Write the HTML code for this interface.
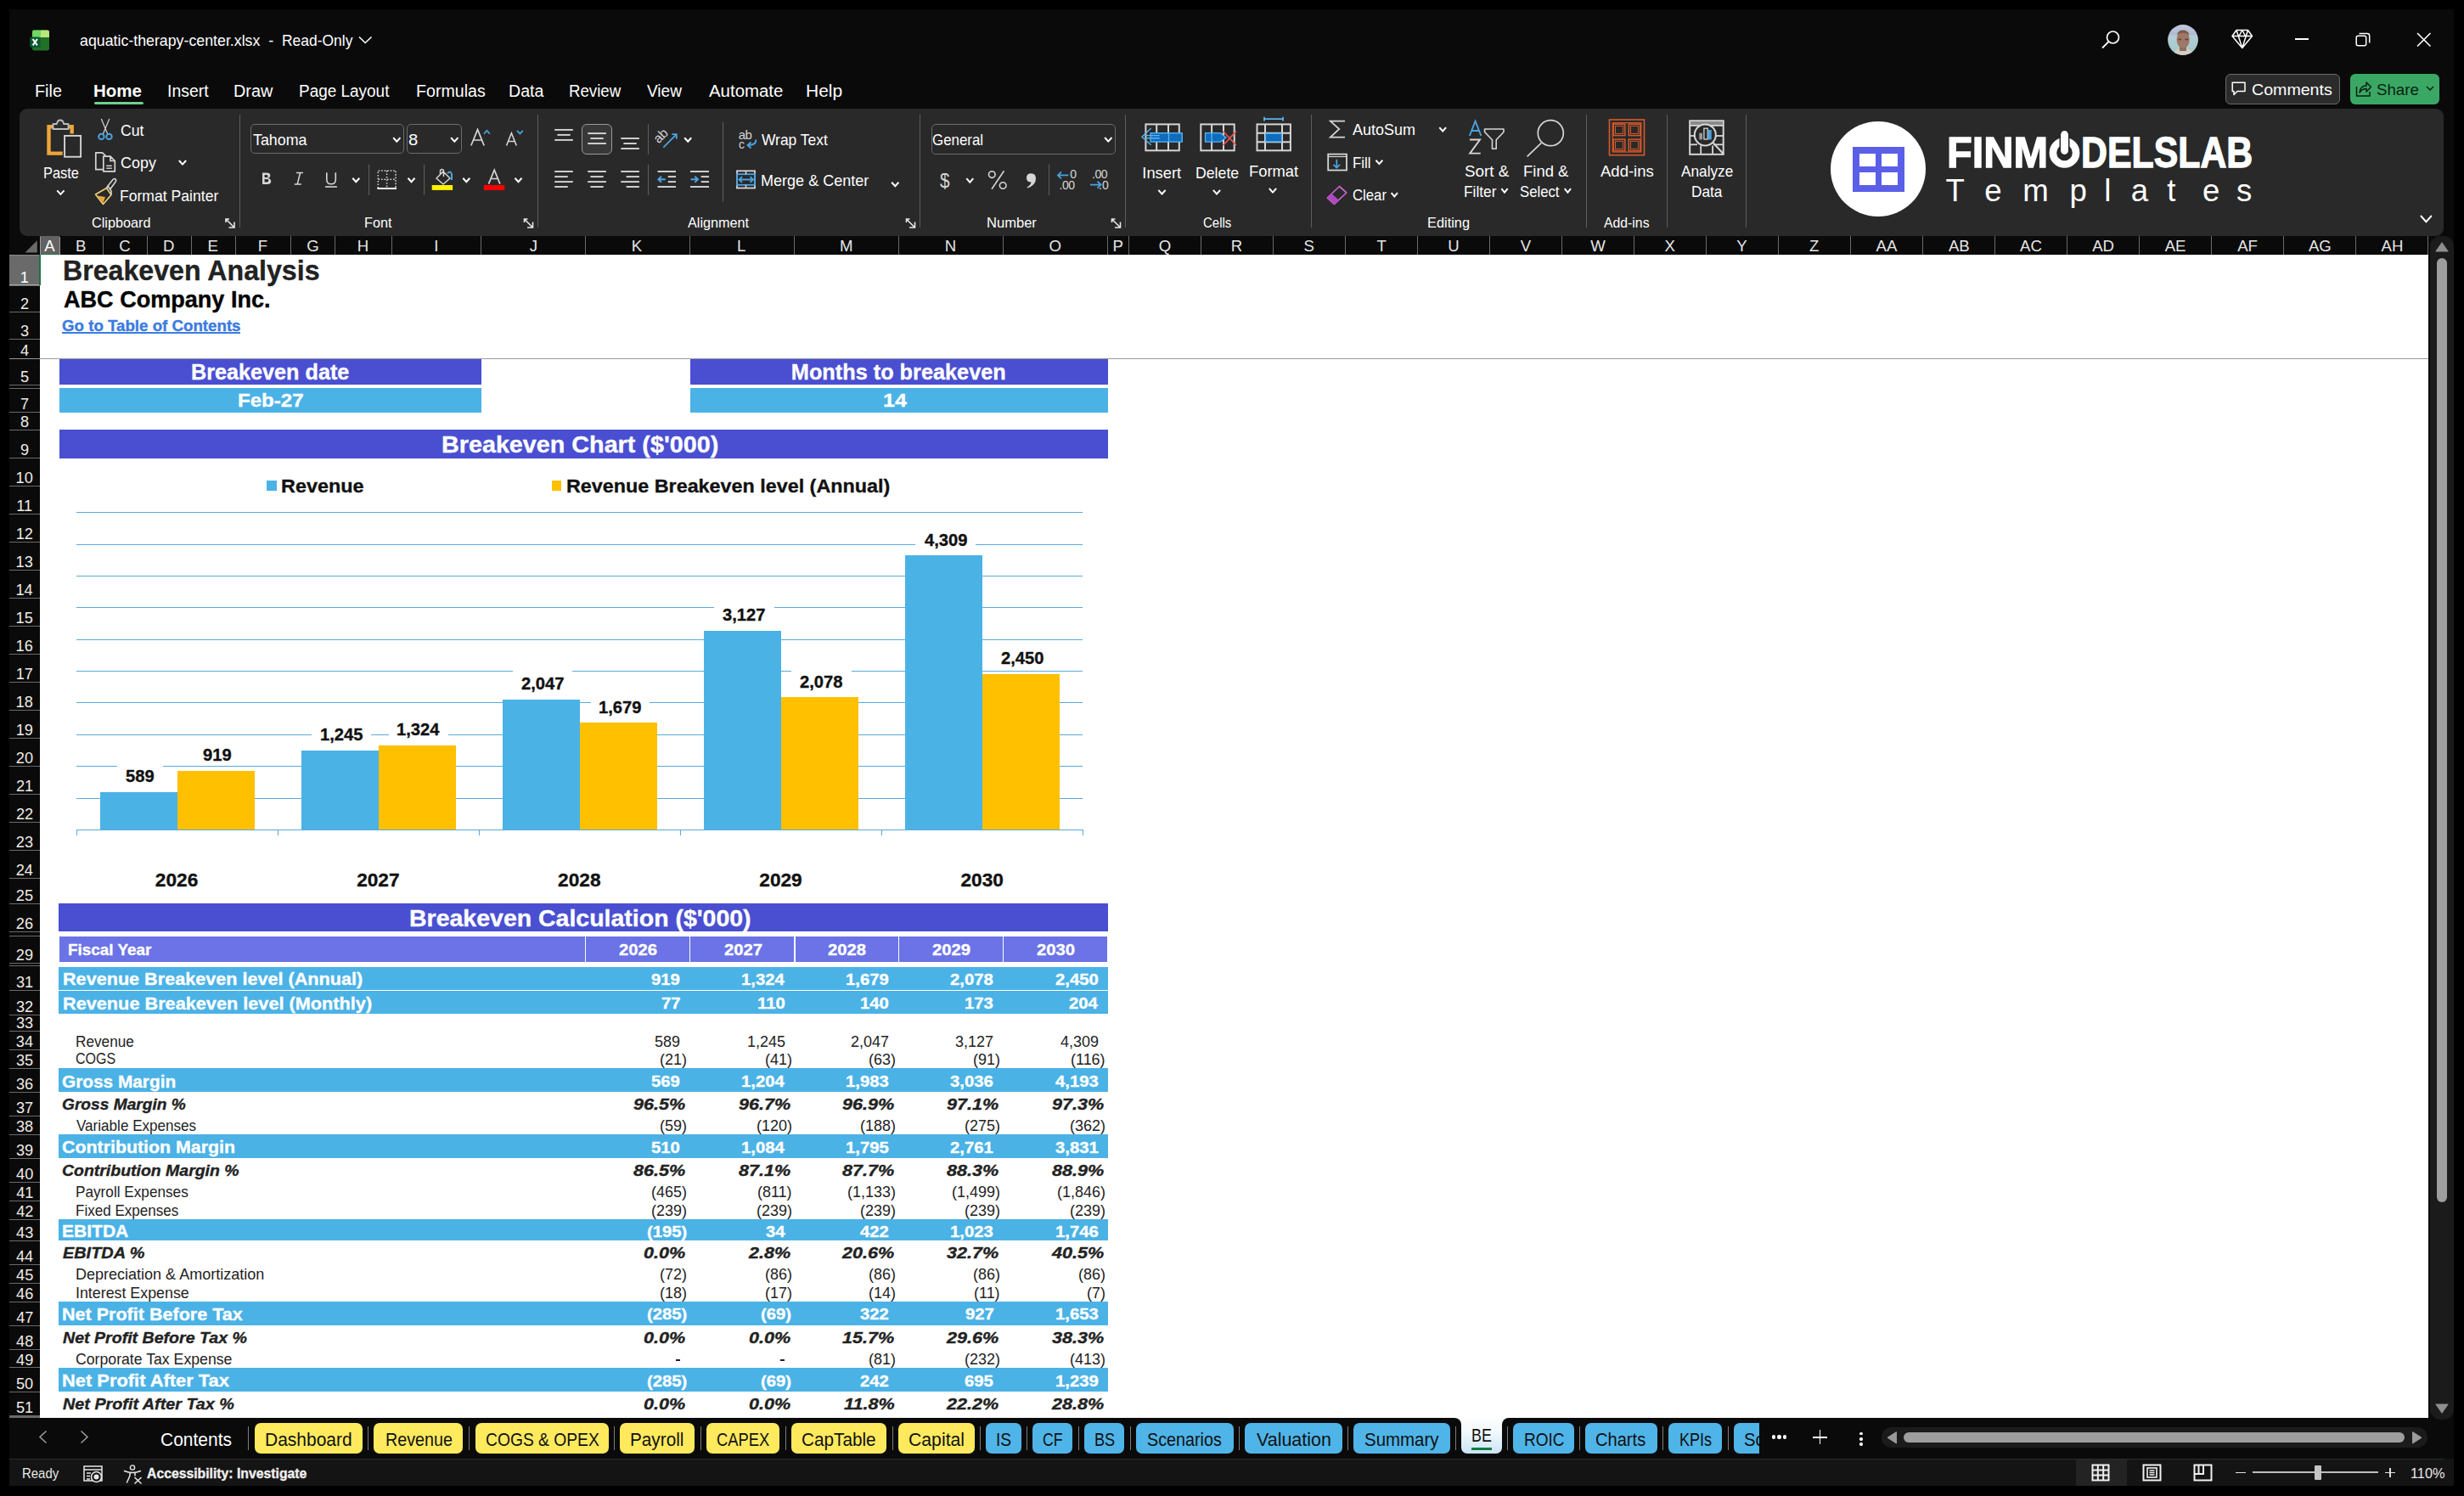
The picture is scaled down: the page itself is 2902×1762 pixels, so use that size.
<!DOCTYPE html>
<html><head><meta charset="utf-8"><title>Excel</title>
<style>
html,body{margin:0;padding:0;}
body{width:2902px;height:1762px;background:#000;position:relative;overflow:hidden;font-family:"Liberation Sans",sans-serif;}
div{box-sizing:border-box;}
svg{overflow:visible;}
</style></head><body>
<div style="position:absolute;left:11.00px;top:11.00px;width:2879.00px;height:1739.00px;background:#0a0a0a;"></div>
<svg style="position:absolute;left:35.00px;top:34.50px;" width="24" height="25" viewBox="0 0 24 25">
<rect x="3" y="0.4" width="20" height="24" rx="2.2" fill="#207028"/>
<path d="M3 9 V2.6 Q3 0.4 5.2 0.4 H13 V9 Z" fill="#72d564"/>
<path d="M13 0.4 H20.8 Q23 0.4 23 2.6 V9 H13 Z" fill="#b9e77a"/>
<rect x="0.2" y="8.5" width="12.4" height="12.4" rx="2.5" fill="#0b5a30"/>
<path d="M3.6 11 L8.9 18.4 M8.9 11 L3.6 18.4" stroke="#ffffff" stroke-width="2.1"/>
</svg>
<div style="position:absolute;left:94.24px;top:39.02px;font-size:18.17px;line-height:18.17px;font-weight:normal;font-style:normal;color:#fff;white-space:pre;transform:scaleX(0.9789);transform-origin:0 0;">aquatic-therapy-center.xlsx</div>
<div style="position:absolute;left:316.23px;top:39.02px;font-size:18.17px;line-height:18.17px;font-weight:normal;font-style:normal;color:#fff;white-space:pre;">-</div>
<div style="position:absolute;left:332.00px;top:39.02px;font-size:18.17px;line-height:18.17px;font-weight:normal;font-style:normal;color:#fff;white-space:pre;transform:scaleX(0.9614);transform-origin:0 0;">Read-Only</div>
<svg style="position:absolute;left:422.00px;top:42.00px;" width="17" height="10" viewBox="0 0 17 10"><path d="M1 1.5 L8.2 8.5 L15.5 1.5" stroke="#fff" stroke-width="1.6" fill="none"/></svg>
<svg style="position:absolute;left:2474.00px;top:35.00px;" width="24" height="24" viewBox="0 0 24 24"><circle cx="14.5" cy="9" r="7" stroke="#fff" stroke-width="1.7" fill="none"/><path d="M9.5 14 L2 21.5" stroke="#fff" stroke-width="1.8"/></svg>
<svg style="position:absolute;left:2553.00px;top:29.00px;" width="36" height="36" viewBox="0 0 36 36"><defs><clipPath id="av"><circle cx="18" cy="18" r="17.9"/></clipPath>
<linearGradient id="avg" x1="0" y1="0" x2="0" y2="1"><stop offset="0" stop-color="#c4c8dc"/><stop offset="0.33" stop-color="#aebbd4"/><stop offset="0.36" stop-color="#b4cfd6"/><stop offset="1" stop-color="#9fc8c8"/></linearGradient></defs>
<g clip-path="url(#av)"><rect width="36" height="36" fill="url(#avg)"/>
<path d="M6 36 Q9 29 14 28 H22 Q28 29 31 36 Z" fill="#d6cdc2"/>
<rect x="14" y="22" width="8" height="9" fill="#8c6c5e"/>
<ellipse cx="18.2" cy="17.5" rx="7.6" ry="10.5" fill="#9e7766"/>
<path d="M11 12 Q12 6.5 18 6.5 Q24 6.5 25.5 12 Q22 9.5 18 9.5 Q14 9.5 11 12 Z" fill="#7d5a4c"/>
<path d="M12.5 17.5 H16 M20.5 17.5 H24" stroke="#5a3e34" stroke-width="1.3"/></g></svg>
<svg style="position:absolute;left:2628.00px;top:34.00px;" width="26" height="24" viewBox="0 0 26 24"><path d="M6 1.5 H19.5 L24.5 8.5 L12.8 22.5 L1 8.5 Z M1 8.5 H24.5 M6 1.5 L12.8 22.5 L19.5 1.5 M9 8.5 L12.8 1.5 L16.5 8.5" stroke="#fff" stroke-width="1.5" fill="none" stroke-linejoin="round"/></svg>
<div style="position:absolute;left:2703.00px;top:45.00px;width:16.00px;height:1.80px;background:#fff;"></div>
<svg style="position:absolute;left:2774.00px;top:38.00px;" width="19" height="19" viewBox="0 0 19 19"><rect x="1.2" y="4.2" width="11.5" height="11.5" rx="2" stroke="#fff" stroke-width="1.5" fill="none"/><path d="M4.5 1.5 H14 Q16.7 1.5 16.7 4.2 V12.5" stroke="#fff" stroke-width="1.5" fill="none"/></svg>
<svg style="position:absolute;left:2846.00px;top:38.00px;" width="18" height="18" viewBox="0 0 18 18"><path d="M1 1 L16.5 16.5 M16.5 1 L1 16.5" stroke="#fff" stroke-width="1.6"/></svg>
<div style="position:absolute;left:40.71px;top:97.57px;font-size:19.77px;line-height:19.77px;font-weight:normal;font-style:normal;color:#fff;white-space:pre;transform:scaleX(1.0033);transform-origin:0 0;">File</div>
<div style="position:absolute;left:196.85px;top:97.57px;font-size:19.77px;line-height:19.77px;font-weight:normal;font-style:normal;color:#fff;white-space:pre;transform:scaleX(0.9844);transform-origin:0 0;">Insert</div>
<div style="position:absolute;left:275.41px;top:97.57px;font-size:19.77px;line-height:19.77px;font-weight:normal;font-style:normal;color:#fff;white-space:pre;transform:scaleX(1.0039);transform-origin:0 0;">Draw</div>
<div style="position:absolute;left:352.08px;top:97.57px;font-size:19.77px;line-height:19.77px;font-weight:normal;font-style:normal;color:#fff;white-space:pre;transform:scaleX(0.9587);transform-origin:0 0;">Page Layout</div>
<div style="position:absolute;left:490.23px;top:97.57px;font-size:19.77px;line-height:19.77px;font-weight:normal;font-style:normal;color:#fff;white-space:pre;transform:scaleX(0.9924);transform-origin:0 0;">Formulas</div>
<div style="position:absolute;left:598.73px;top:97.57px;font-size:19.77px;line-height:19.77px;font-weight:normal;font-style:normal;color:#fff;white-space:pre;transform:scaleX(0.9906);transform-origin:0 0;">Data</div>
<div style="position:absolute;left:670.01px;top:97.57px;font-size:19.77px;line-height:19.77px;font-weight:normal;font-style:normal;color:#fff;white-space:pre;transform:scaleX(0.9446);transform-origin:0 0;">Review</div>
<div style="position:absolute;left:761.95px;top:97.57px;font-size:19.77px;line-height:19.77px;font-weight:normal;font-style:normal;color:#fff;white-space:pre;transform:scaleX(0.9647);transform-origin:0 0;">View</div>
<div style="position:absolute;left:834.80px;top:97.57px;font-size:19.77px;line-height:19.77px;font-weight:normal;font-style:normal;color:#fff;white-space:pre;transform:scaleX(1.0327);transform-origin:0 0;">Automate</div>
<div style="position:absolute;left:949.22px;top:97.57px;font-size:19.77px;line-height:19.77px;font-weight:normal;font-style:normal;color:#fff;white-space:pre;transform:scaleX(1.0614);transform-origin:0 0;">Help</div>
<div style="position:absolute;left:110.07px;top:97.57px;font-size:19.77px;line-height:19.77px;font-weight:bold;font-style:normal;color:#fff;white-space:pre;transform:scaleX(1.0382);transform-origin:0 0;">Home</div>
<div style="position:absolute;left:110.70px;top:119.80px;width:58.40px;height:3.00px;background:#6fcf8f;border-radius:2px;"></div>
<div style="position:absolute;left:2621.30px;top:87.20px;width:134.30px;height:35.60px;background:#2b2b2b;border:1.2px solid #6a6a6a;border-radius:6px;"></div>
<svg style="position:absolute;left:2628.00px;top:96.00px;" width="18" height="18" viewBox="0 0 18 18"><path d="M1.2 1.2 H16 V11.5 H7 L3 15.5 V11.5 H1.2 Z" stroke="#fff" stroke-width="1.5" fill="none" stroke-linejoin="round"/></svg>
<div style="position:absolute;left:2651.82px;top:98.17px;font-size:17.88px;line-height:17.88px;font-weight:normal;font-style:normal;color:#fff;white-space:pre;transform:scaleX(1.0975);transform-origin:0 0;">Comments</div>
<div style="position:absolute;left:2768.00px;top:87.20px;width:104.80px;height:35.60px;background:#3aa864;border-radius:6px;"></div>
<svg style="position:absolute;left:2774.00px;top:95.00px;" width="20" height="20" viewBox="0 0 20 20"><path d="M1.5 7 V18 H17 V13" stroke="#0a1f12" stroke-width="1.5" fill="none"/><path d="M5 14 Q6 6 13 6 V2 L18.5 7.5 L13 13 V9.5 Q8 9.5 5 14 Z" stroke="#0a1f12" stroke-width="1.5" fill="none" stroke-linejoin="round"/></svg>
<div style="position:absolute;left:2798.76px;top:98.17px;font-size:17.88px;line-height:17.88px;font-weight:normal;font-style:normal;color:#0a1f12;white-space:pre;transform:scaleX(1.0450);transform-origin:0 0;">Share</div>
<svg style="position:absolute;left:2857.00px;top:101.00px;" width="10" height="7" viewBox="0 0 10 7"><path d="M1 1 L5 5 L9 1" stroke="#0a1f12" stroke-width="1.5" fill="none"/></svg>
<div style="position:absolute;left:23.00px;top:128.00px;width:2855.00px;height:149.50px;background:#292929;border-radius:9px;"></div>
<div style="position:absolute;left:281.80px;top:135.00px;width:1.20px;height:133.00px;background:#5c5c5c;"></div>
<div style="position:absolute;left:632.90px;top:135.00px;width:1.20px;height:133.00px;background:#5c5c5c;"></div>
<div style="position:absolute;left:1082.60px;top:135.00px;width:1.20px;height:133.00px;background:#5c5c5c;"></div>
<div style="position:absolute;left:1324.90px;top:135.00px;width:1.20px;height:133.00px;background:#5c5c5c;"></div>
<div style="position:absolute;left:1543.80px;top:135.00px;width:1.20px;height:133.00px;background:#5c5c5c;"></div>
<div style="position:absolute;left:1868.10px;top:135.00px;width:1.20px;height:133.00px;background:#5c5c5c;"></div>
<div style="position:absolute;left:1962.80px;top:135.00px;width:1.20px;height:133.00px;background:#5c5c5c;"></div>
<div style="position:absolute;left:2056.20px;top:135.00px;width:1.20px;height:133.00px;background:#5c5c5c;"></div>
<div style="position:absolute;left:108.49px;top:254.97px;font-size:15.99px;line-height:15.99px;font-weight:normal;font-style:normal;color:#fff;white-space:pre;transform:scaleX(1.0145);transform-origin:0 0;">Clipboard</div>
<div style="position:absolute;left:428.70px;top:254.97px;font-size:15.99px;line-height:15.99px;font-weight:normal;font-style:normal;color:#fff;white-space:pre;transform:scaleX(1.0125);transform-origin:0 0;">Font</div>
<div style="position:absolute;left:810.00px;top:254.97px;font-size:15.99px;line-height:15.99px;font-weight:normal;font-style:normal;color:#fff;white-space:pre;transform:scaleX(1.0137);transform-origin:0 0;">Alignment</div>
<div style="position:absolute;left:1162.18px;top:254.97px;font-size:15.99px;line-height:15.99px;font-weight:normal;font-style:normal;color:#fff;white-space:pre;transform:scaleX(1.0358);transform-origin:0 0;">Number</div>
<div style="position:absolute;left:1417.25px;top:254.97px;font-size:15.99px;line-height:15.99px;font-weight:normal;font-style:normal;color:#fff;white-space:pre;transform:scaleX(0.9364);transform-origin:0 0;">Cells</div>
<div style="position:absolute;left:1681.19px;top:254.97px;font-size:15.99px;line-height:15.99px;font-weight:normal;font-style:normal;color:#fff;white-space:pre;transform:scaleX(1.0235);transform-origin:0 0;">Editing</div>
<div style="position:absolute;left:1888.50px;top:254.97px;font-size:15.99px;line-height:15.99px;font-weight:normal;font-style:normal;color:#fff;white-space:pre;transform:scaleX(0.9881);transform-origin:0 0;">Add-ins</div>
<div style="position:absolute;left:50.68px;top:195.30px;font-size:18.31px;line-height:18.31px;font-weight:normal;font-style:normal;color:#fff;white-space:pre;transform:scaleX(0.8979);transform-origin:0 0;">Paste</div>
<div style="position:absolute;left:141.62px;top:144.50px;font-size:18.31px;line-height:18.31px;font-weight:normal;font-style:normal;color:#fff;white-space:pre;transform:scaleX(0.9647);transform-origin:0 0;">Cut</div>
<div style="position:absolute;left:141.60px;top:183.30px;font-size:18.31px;line-height:18.31px;font-weight:normal;font-style:normal;color:#fff;white-space:pre;transform:scaleX(0.9798);transform-origin:0 0;">Copy</div>
<div style="position:absolute;left:141.09px;top:222.10px;font-size:18.31px;line-height:18.31px;font-weight:normal;font-style:normal;color:#fff;white-space:pre;transform:scaleX(0.9609);transform-origin:0 0;">Format Painter</div>
<div style="position:absolute;left:298.24px;top:155.90px;font-size:18.31px;line-height:18.31px;font-weight:normal;font-style:normal;color:#fff;white-space:pre;transform:scaleX(0.9748);transform-origin:0 0;">Tahoma</div>
<div style="position:absolute;left:481.24px;top:155.90px;font-size:18.31px;line-height:18.31px;font-weight:normal;font-style:normal;color:#fff;white-space:pre;transform:scaleX(1.1094);transform-origin:0 0;">8</div>
<div style="position:absolute;left:897.26px;top:156.00px;font-size:18.31px;line-height:18.31px;font-weight:normal;font-style:normal;color:#fff;white-space:pre;transform:scaleX(0.9518);transform-origin:0 0;">Wrap Text</div>
<div style="position:absolute;left:895.86px;top:203.80px;font-size:18.31px;line-height:18.31px;font-weight:normal;font-style:normal;color:#fff;white-space:pre;transform:scaleX(0.9858);transform-origin:0 0;">Merge &amp; Center</div>
<div style="position:absolute;left:1098.15px;top:156.10px;font-size:18.31px;line-height:18.31px;font-weight:normal;font-style:normal;color:#fff;white-space:pre;transform:scaleX(0.9231);transform-origin:0 0;">General</div>
<div style="position:absolute;left:1345.35px;top:195.20px;font-size:18.31px;line-height:18.31px;font-weight:normal;font-style:normal;color:#fff;white-space:pre;">Insert</div>
<div style="position:absolute;left:1408.18px;top:195.20px;font-size:18.31px;line-height:18.31px;font-weight:normal;font-style:normal;color:#fff;white-space:pre;transform:scaleX(0.9668);transform-origin:0 0;">Delete</div>
<div style="position:absolute;left:1471.03px;top:193.30px;font-size:18.31px;line-height:18.31px;font-weight:normal;font-style:normal;color:#fff;white-space:pre;transform:scaleX(1.0044);transform-origin:0 0;">Format</div>
<div style="position:absolute;left:1593.40px;top:144.40px;font-size:18.31px;line-height:18.31px;font-weight:normal;font-style:normal;color:#fff;white-space:pre;transform:scaleX(0.9848);transform-origin:0 0;">AutoSum</div>
<div style="position:absolute;left:1592.64px;top:183.00px;font-size:18.31px;line-height:18.31px;font-weight:normal;font-style:normal;color:#fff;white-space:pre;transform:scaleX(0.9257);transform-origin:0 0;">Fill</div>
<div style="position:absolute;left:1592.56px;top:221.40px;font-size:18.31px;line-height:18.31px;font-weight:normal;font-style:normal;color:#fff;white-space:pre;transform:scaleX(0.9136);transform-origin:0 0;">Clear</div>
<div style="position:absolute;left:1724.65px;top:193.10px;font-size:18.31px;line-height:18.31px;font-weight:normal;font-style:normal;color:#fff;white-space:pre;transform:scaleX(1.0298);transform-origin:0 0;">Sort &amp;</div>
<div style="position:absolute;left:1723.82px;top:217.10px;font-size:18.31px;line-height:18.31px;font-weight:normal;font-style:normal;color:#fff;white-space:pre;transform:scaleX(0.9445);transform-origin:0 0;">Filter</div>
<div style="position:absolute;left:1794.02px;top:193.10px;font-size:18.31px;line-height:18.31px;font-weight:normal;font-style:normal;color:#fff;white-space:pre;transform:scaleX(1.0100);transform-origin:0 0;">Find &amp;</div>
<div style="position:absolute;left:1789.85px;top:217.10px;font-size:18.31px;line-height:18.31px;font-weight:normal;font-style:normal;color:#fff;white-space:pre;transform:scaleX(0.9141);transform-origin:0 0;">Select</div>
<div style="position:absolute;left:1885.10px;top:193.10px;font-size:18.31px;line-height:18.31px;font-weight:normal;font-style:normal;color:#fff;white-space:pre;transform:scaleX(1.0123);transform-origin:0 0;">Add-ins</div>
<div style="position:absolute;left:1980.40px;top:193.10px;font-size:18.31px;line-height:18.31px;font-weight:normal;font-style:normal;color:#fff;white-space:pre;transform:scaleX(0.9414);transform-origin:0 0;">Analyze</div>
<div style="position:absolute;left:1991.82px;top:217.40px;font-size:18.31px;line-height:18.31px;font-weight:normal;font-style:normal;color:#fff;white-space:pre;transform:scaleX(0.9403);transform-origin:0 0;">Data</div>
<div style="position:absolute;left:295.20px;top:146.20px;width:180.40px;height:35.20px;background:transparent;border:1.3px solid #6a6a6a;border-radius:5px;"></div>
<div style="position:absolute;left:479.30px;top:146.20px;width:64.60px;height:35.20px;background:transparent;border:1.3px solid #6a6a6a;border-radius:5px;"></div>
<div style="position:absolute;left:1096.60px;top:146.40px;width:217.00px;height:35.20px;background:transparent;border:1.3px solid #6a6a6a;border-radius:5px;"></div>
<div style="position:absolute;left:685.20px;top:146.10px;width:35.50px;height:35.60px;background:#383838;border:1.3px solid #9a9a9a;border-radius:6px;"></div>
<svg style="position:absolute;left:0;top:0;" width="2902" height="300" viewBox="0 0 2902 300"><path d="M73.7 180.6 H57.5 V149.3 H63 M80 149.3 H84.7 V157.4" stroke="#eea63a" stroke-width="4.4" fill="none"/><path d="M62.5 152 V146 H67 Q67.5 141.5 71 141.5 Q74.5 141.5 75 146 H80.5 V152 Z" stroke="#bdbdbd" stroke-width="1.8" fill="#2d2d2d" stroke-linejoin="round"/><rect x="76.1" y="159.9" width="19" height="24.8" stroke="#d6d6d6" stroke-width="1.9" fill="#292929"/><path d="M67.26 224.32 L71.40 228.88 L75.54 224.32" stroke="#ffffff" stroke-width="2.0" fill="none"/><path d="M119.3 140.1 L126.8 158 M128.8 140.1 L121.3 158" stroke="#d6d6d6" stroke-width="1.2" fill="none"/><circle cx="119.4" cy="160.9" r="3.2" stroke="#4aa3e0" stroke-width="2" fill="none"/><circle cx="128.5" cy="160.9" r="3.2" stroke="#4aa3e0" stroke-width="2" fill="none"/><path d="M121.5 199.7 H112.8 V179.8 H120.5 L124.5 183.5" stroke="#d6d6d6" stroke-width="1.7" fill="none" stroke-linejoin="round"/><path d="M121.8 184.2 H130 L135.3 189.5 V201.9 H121.8 Z M130 184.2 V189.5 H135.3" stroke="#d6d6d6" stroke-width="1.7" fill="#292929" stroke-linejoin="round"/><path d="M125.20 195.30 L131.80 195.30" stroke="#d6d6d6" stroke-width="1.4" /><path d="M125.20 198.20 L131.80 198.20" stroke="#d6d6d6" stroke-width="1.4" /><path d="M210.86 189.02 L215.00 193.58 L219.14 189.02" stroke="#ffffff" stroke-width="2.0" fill="none"/><path d="M112.5 229 L125.5 221.5 L131 229.5 L121.5 240.5 Z" stroke="#f0d27a" stroke-width="1.6" fill="none" stroke-linejoin="round"/><path d="M114.5 230.5 L124 232 L121.5 239 Z" fill="#eea63a"/><path d="M125.5 221.5 L127 219 L131 225 L131 229.5 M127 219 L133 211.5 Q135 209.5 136.3 211.5 Q137.3 213 135.5 215 L130 222.5" stroke="#d6d6d6" stroke-width="1.6" fill="none" stroke-linejoin="round"/><path d="M266 262 V258 H270 M266 258 L276 268 M276 261.5 V268 H269.5" stroke="#e8e8e8" stroke-width="1.6" fill="none"/><path d="M463.16 162.12 L467.30 166.68 L471.44 162.12" stroke="#ffffff" stroke-width="2.0" fill="none"/><path d="M531.16 162.12 L535.30 166.68 L539.44 162.12" stroke="#ffffff" stroke-width="2.0" fill="none"/><path d="M554.8 171.5 L562.5 152.6 L570.2 171.5 M557.6 165 H567.4" stroke="#d6d6d6" stroke-width="1.7" fill="none"/><path d="M570 157.6 L573.4 153.8 L576.8 157.6" stroke="#4aa3e0" stroke-width="1.7" fill="none"/><path d="M596.5 171.5 L602.4 156.8 L608.3 171.5 M598.7 166.5 H606.1" stroke="#d6d6d6" stroke-width="1.6" fill="none"/><path d="M609 153.8 L612.4 157.4 L615.8 153.8" stroke="#4aa3e0" stroke-width="1.7" fill="none"/><path d="M309 203.5 H314.2 Q318.3 203.5 318.3 206.8 Q318.3 209.3 315.5 209.9 Q319.2 210.5 319.2 213.5 Q319.2 217 314.6 217 H309 Z M311.6 205.9 V208.9 H314 Q315.6 208.9 315.6 207.4 Q315.6 205.9 314 205.9 Z M311.6 211 V214.6 H314.3 Q316.4 214.6 316.4 212.8 Q316.4 211 314.3 211 Z" fill="#d6d6d6" fill-rule="evenodd"/><path d="M349 203.5 H357 M346.8 217 H354.8 M353.6 203.5 L350.2 217" stroke="#d6d6d6" stroke-width="1.5" fill="none"/><path d="M384.8 203.3 V211.5 Q384.8 216.8 390 216.8 Q395.3 216.8 395.3 211.5 V203.3" stroke="#d6d6d6" stroke-width="1.6" fill="none"/><path d="M383.00 220.00 L396.90 220.00" stroke="#d6d6d6" stroke-width="1.6" /><path d="M415.30 209.72 L419.30 214.28 L423.30 209.72" stroke="#ffffff" stroke-width="2.0" fill="none"/><rect x="434" y="193.8" width="1.1" height="36" fill="#5c5c5c"/><path d="M445.3 221.5 V200.9 H466 V221.5 M455.6 201 V221 M445.5 211.2 H466" stroke="#d6d6d6" stroke-width="1.5" stroke-dasharray="1.6 1.9" fill="none"/><path d="M444.30 222.00 L467.00 222.00" stroke="#ffffff" stroke-width="2" /><path d="M480.50 209.72 L484.50 214.28 L488.50 209.72" stroke="#ffffff" stroke-width="2.0" fill="none"/><rect x="499" y="193.8" width="1.1" height="36" fill="#5c5c5c"/><path d="M514 210 L522 202 L530 210 L522 217 Z M518.5 205.5 V201.5 Q518.5 199.5 520.5 199.5 Q522.5 199.5 522.5 201.5 V208" stroke="#d6d6d6" stroke-width="1.5" fill="none" stroke-linejoin="round"/><path d="M527 204 Q530.5 200.5 532 205 V212" stroke="#4aa3e0" stroke-width="2" fill="none"/><rect x="508.7" y="218" width="24.4" height="5.9" fill="#fff200"/><path d="M545.30 209.72 L549.30 214.28 L553.30 209.72" stroke="#ffffff" stroke-width="2.0" fill="none"/><path d="M575.5 216.6 L582.2 200.2 L588.9 216.6 M578 210.5 H586.4" stroke="#d6d6d6" stroke-width="1.7" fill="none"/><rect x="569.8" y="218" width="24.5" height="5.9" fill="#ff0000"/><path d="M606.50 209.72 L610.50 214.28 L614.50 209.72" stroke="#ffffff" stroke-width="2.0" fill="none"/><path d="M617.5 262 V258 H621.5 M617.5 258 L627.5 268 M627.5 261.5 V268 H621.0" stroke="#e8e8e8" stroke-width="1.6" fill="none"/><path d="M653.20 152.90 L674.80 152.90" stroke="#d6d6d6" stroke-width="1.9" /><path d="M656.40 158.90 L671.70 158.90" stroke="#d6d6d6" stroke-width="1.9" /><path d="M653.20 164.90 L674.80 164.90" stroke="#d6d6d6" stroke-width="1.9" /><path d="M692.20 157.10 L713.90 157.10" stroke="#d6d6d6" stroke-width="1.9" /><path d="M695.40 163.00 L710.70 163.00" stroke="#d6d6d6" stroke-width="1.9" /><path d="M692.20 169.00 L713.90 169.00" stroke="#d6d6d6" stroke-width="1.9" /><path d="M731.30 163.00 L752.90 163.00" stroke="#d6d6d6" stroke-width="1.9" /><path d="M734.40 169.00 L749.70 169.00" stroke="#d6d6d6" stroke-width="1.9" /><path d="M731.30 175.00 L752.90 175.00" stroke="#d6d6d6" stroke-width="1.9" /><rect x="763" y="146" width="1.1" height="36" fill="#5c5c5c"/><rect x="763" y="193.8" width="1.1" height="36" fill="#5c5c5c"/><rect x="851" y="143.7" width="1.1" height="94" fill="#5c5c5c"/><text x="0" y="0" transform="translate(775.8 169.6) rotate(-45)" font-size="15.5" fill="#d6d6d6" font-family="Liberation Sans" letter-spacing="-0.3">ab</text><path d="M781.3 173.6 L796.8 158.2 M791.3 158.2 H796.8 V163.7" stroke="#4aa3e0" stroke-width="1.8" fill="none"/><path d="M806.20 162.27 L810.20 166.73 L814.20 162.27" stroke="#ffffff" stroke-width="2.0" fill="none"/><text x="869.8" y="163.6" font-size="15" fill="#d6d6d6" font-family="Liberation Sans" letter-spacing="-0.6">ab</text><text x="869.9" y="174.6" font-size="14" fill="#d6d6d6" font-family="Liberation Sans">c</text><path d="M890 164.5 Q891.5 170.5 881 171 M884.5 167.5 L880.5 171 L884.5 174.5" stroke="#4aa3e0" stroke-width="1.9" fill="none"/><path d="M653.20 202.00 L674.80 202.00" stroke="#d6d6d6" stroke-width="1.9" /><path d="M653.20 208.10 L668.70 208.10" stroke="#d6d6d6" stroke-width="1.9" /><path d="M653.20 214.10 L674.80 214.10" stroke="#d6d6d6" stroke-width="1.9" /><path d="M653.20 220.00 L668.70 220.00" stroke="#d6d6d6" stroke-width="1.9" /><path d="M692.20 202.00 L713.90 202.00" stroke="#d6d6d6" stroke-width="1.9" /><path d="M695.40 208.10 L710.70 208.10" stroke="#d6d6d6" stroke-width="1.9" /><path d="M692.20 214.10 L713.90 214.10" stroke="#d6d6d6" stroke-width="1.9" /><path d="M695.40 220.00 L710.70 220.00" stroke="#d6d6d6" stroke-width="1.9" /><path d="M731.30 202.00 L752.90 202.00" stroke="#d6d6d6" stroke-width="1.9" /><path d="M737.60 208.10 L752.90 208.10" stroke="#d6d6d6" stroke-width="1.9" /><path d="M731.30 214.10 L752.90 214.10" stroke="#d6d6d6" stroke-width="1.9" /><path d="M737.60 220.00 L752.90 220.00" stroke="#d6d6d6" stroke-width="1.9" /><path d="M774.50 202.00 L796.00 202.00" stroke="#d6d6d6" stroke-width="1.9" /><path d="M786.70 208.10 L796.00 208.10" stroke="#d6d6d6" stroke-width="1.9" /><path d="M786.70 214.10 L796.00 214.10" stroke="#d6d6d6" stroke-width="1.9" /><path d="M774.50 220.00 L796.00 220.00" stroke="#d6d6d6" stroke-width="1.9" /><path d="M783.8 211.2 H775.5 M779 207.7 L775.3 211.2 L779 214.7" stroke="#4aa3e0" stroke-width="1.9" fill="none"/><path d="M813.00 202.00 L835.00 202.00" stroke="#d6d6d6" stroke-width="1.9" /><path d="M825.70 208.10 L835.00 208.10" stroke="#d6d6d6" stroke-width="1.9" /><path d="M825.70 214.10 L835.00 214.10" stroke="#d6d6d6" stroke-width="1.9" /><path d="M813.00 220.00 L835.00 220.00" stroke="#d6d6d6" stroke-width="1.9" /><path d="M813.5 211.2 H821.8 M818.3 207.7 L822 211.2 L818.3 214.7" stroke="#4aa3e0" stroke-width="1.9" fill="none"/><rect x="868" y="201.3" width="21" height="20.2" stroke="#d6d6d6" stroke-width="1.8" fill="none"/><rect x="868" y="205.2" width="21" height="12.6" stroke="#4aa3e0" stroke-width="1.8" fill="none"/><path d="M878.50 201.30 L878.50 205.20" stroke="#d6d6d6" stroke-width="1.5" /><path d="M878.50 217.80 L878.50 221.50" stroke="#d6d6d6" stroke-width="1.5" /><path d="M870.5 211.5 H887 M874 208.2 L870.5 211.5 L874 214.8 M883.5 208.2 L887 211.5 L883.5 214.8" stroke="#4aa3e0" stroke-width="1.8" fill="none"/><path d="M1050.16 214.72 L1054.30 219.28 L1058.44 214.72" stroke="#ffffff" stroke-width="2.0" fill="none"/><path d="M1067.5 262 V258 H1071.5 M1067.5 258 L1077.5 268 M1077.5 261.5 V268 H1071.0" stroke="#e8e8e8" stroke-width="1.6" fill="none"/><path d="M1301.16 162.02 L1305.30 166.58 L1309.44 162.02" stroke="#ffffff" stroke-width="2.0" fill="none"/><text x="1107" y="221" font-size="24" fill="#d6d6d6" font-family="Liberation Sans" textLength="11.5" lengthAdjust="spacingAndGlyphs">$</text><path d="M1138.30 210.17 L1142.30 214.63 L1146.30 210.17" stroke="#ffffff" stroke-width="2.0" fill="none"/><circle cx="1168.3" cy="205.6" r="3.8" stroke="#d6d6d6" stroke-width="1.6" fill="none"/><circle cx="1181.2" cy="218.5" r="3.8" stroke="#d6d6d6" stroke-width="1.6" fill="none"/><path d="M1182.50 201.30 L1168.00 222.80" stroke="#d6d6d6" stroke-width="1.6" /><path d="M1214.5 204.2 Q1220 204.2 1220 210.5 Q1220 218 1210 221.6 L1209.5 220.5 Q1214 218 1214.5 214.5 Q1209 214.5 1209 209.5 Q1209 204.2 1214.5 204.2 Z" fill="#d6d6d6"/><rect x="1235" y="193.5" width="1.1" height="36.5" fill="#5c5c5c"/><path d="M1258.4 206.4 H1246 M1250 202.4 L1246 206.4 L1250 210.4" stroke="#4aa3e0" stroke-width="1.8" fill="none"/><text x="1260.2" y="210.4" font-size="14" fill="#d6d6d6" font-family="Liberation Sans">0</text><text x="1247.5" y="223" font-size="14" fill="#d6d6d6" font-family="Liberation Sans" letter-spacing="-0.5">.00</text><text x="1286" y="210.4" font-size="14" fill="#d6d6d6" font-family="Liberation Sans" letter-spacing="-0.5">.00</text><text x="1294" y="223" font-size="14" fill="#d6d6d6" font-family="Liberation Sans">.0</text><path d="M1284 217.6 H1296.5 M1292.5 213.6 L1296.5 217.6 L1292.5 221.6" stroke="#4aa3e0" stroke-width="1.8" fill="none"/><path d="M1309.5 262 V258 H1313.5 M1309.5 258 L1319.5 268 M1319.5 261.5 V268 H1313.0" stroke="#e8e8e8" stroke-width="1.6" fill="none"/><rect x="1349.4" y="146.4" width="39.399999999999864" height="30.900000000000006" stroke="#d6d6d6" stroke-width="2" fill="none"/><path d="M1362.20 146.40 L1362.20 177.30" stroke="#d6d6d6" stroke-width="2" /><path d="M1376.00 146.40 L1376.00 177.30" stroke="#d6d6d6" stroke-width="2" /><rect x="1355" y="156.7" width="37.3" height="10.4" fill="#0f6cbd" stroke="#5ab4f0" stroke-width="1.3"/><path d="M1376.50 156.70 L1376.50 167.10" stroke="#5ab4f0" stroke-width="1.3" /><path d="M1365.8 159.6 H1349 M1365.8 162.8 H1349 M1355.7 151.1 L1345 161.2 L1355.7 170.8" stroke="#5ab4f0" stroke-width="1.4" fill="none"/><rect x="1414.3" y="146.4" width="39.40000000000009" height="30.900000000000006" stroke="#d6d6d6" stroke-width="2" fill="none"/><path d="M1427.10 146.40 L1427.10 177.30" stroke="#d6d6d6" stroke-width="2" /><path d="M1441.00 146.40 L1441.00 177.30" stroke="#d6d6d6" stroke-width="2" /><path d="M1419.5 156.7 H1437.5 L1444 161.9 L1437.5 167.1 H1419.5 Z" fill="#0f6cbd" stroke="#5ab4f0" stroke-width="1.3"/><path d="M1427.10 156.70 L1427.10 167.10" stroke="#5ab4f0" stroke-width="1.3" /><path d="M1440.5 154.5 L1456 171.2 M1456 154.5 L1440.5 171.2" stroke="#e25555" stroke-width="1.8"/><rect x="1480.5" y="146.4" width="39.40000000000009" height="30.900000000000006" stroke="#d6d6d6" stroke-width="2" fill="none"/><path d="M1490.00 146.40 L1490.00 177.30" stroke="#d6d6d6" stroke-width="2" /><path d="M1510.00 146.40 L1510.00 177.30" stroke="#d6d6d6" stroke-width="2" /><path d="M1480.50 156.80 L1519.90 156.80" stroke="#d6d6d6" stroke-width="2" /><path d="M1480.50 167.30 L1519.90 167.30" stroke="#d6d6d6" stroke-width="2" /><rect x="1490.5" y="157.2" width="19" height="9.7" fill="#0f6cbd" stroke="#5ab4f0" stroke-width="1.2"/><path d="M1489 140.2 H1511 M1489 137.8 V142.6 M1511 137.8 V142.6" stroke="#5ab4f0" stroke-width="1.8" fill="none"/><path d="M1364.36 223.92 L1368.50 228.48 L1372.64 223.92" stroke="#ffffff" stroke-width="2.0" fill="none"/><path d="M1428.86 223.92 L1433.00 228.48 L1437.14 223.92" stroke="#ffffff" stroke-width="2.0" fill="none"/><path d="M1494.86 222.02 L1499.00 226.58 L1503.14 222.02" stroke="#ffffff" stroke-width="2.0" fill="none"/><path d="M1584 142.6 H1566.8 L1577.3 152 L1566.8 161.6 H1584" stroke="#d6d6d6" stroke-width="1.7" fill="none" stroke-linejoin="miter"/><path d="M1695.29 150.16 L1699.20 154.44 L1703.11 150.16" stroke="#ffffff" stroke-width="2.0" fill="none"/><rect x="1564.2" y="181.6" width="21.8" height="18.9" stroke="#d6d6d6" stroke-width="1.8" fill="none"/><path d="M1564.20 184.50 L1586.00 184.50" stroke="#d6d6d6" stroke-width="1.2" /><path d="M1574.3 187.8 V197.5 M1570.5 193.8 L1574.3 197.6 L1578.1 193.8" stroke="#4aa3e0" stroke-width="1.8" fill="none"/><path d="M1620.49 188.72 L1624.40 193.09 L1628.31 188.72" stroke="#ffffff" stroke-width="2.0" fill="none"/><path d="M1577.5 219.5 L1585.8 227 L1571.4 240.3 L1563.3 233 Z" stroke="#c464d0" stroke-width="1.7" fill="none" stroke-linejoin="round"/><path d="M1563.3 233 L1568.6 228.2 L1576.7 235.5 L1571.4 240.3 Z" fill="#b048c0"/><path d="M1638.62 227.12 L1642.30 231.49 L1645.98 227.12" stroke="#ffffff" stroke-width="2.0" fill="none"/><path d="M1730.8 160 L1737.6 142.6 L1744.4 160 M1733.3 154 H1742" stroke="#4aa3e0" stroke-width="1.9" fill="none"/><path d="M1731 164.5 H1743 L1731.2 180.6 H1743.8" stroke="#d6d6d6" stroke-width="1.9" fill="none" stroke-linejoin="miter"/><path d="M1748.6 152 H1771 V155.5 L1762.2 164.8 V175.2 H1757.5 V164.8 L1748.6 155.5 Z" stroke="#d6d6d6" stroke-width="1.6" fill="none" stroke-linejoin="round"/><path d="M1768.32 222.22 L1772.00 226.59 L1775.68 222.22" stroke="#ffffff" stroke-width="2.0" fill="none"/><circle cx="1826.3" cy="156.7" r="15" stroke="#d6d6d6" stroke-width="1.7" fill="none"/><path d="M1815.30 168.30 L1798.60 184.30" stroke="#d6d6d6" stroke-width="1.7" /><path d="M1842.72 222.22 L1846.40 226.59 L1850.08 222.22" stroke="#ffffff" stroke-width="2.0" fill="none"/><rect x="1895.5" y="141" width="41" height="41.7" stroke="#d65a2c" stroke-width="1.6" fill="none"/><rect x="1899.2" y="144.7" width="33.6" height="34.3" stroke="#d65a2c" stroke-width="1.2" fill="none"/><rect x="1900.3" y="146.1" width="13.5" height="13.5" stroke="#d65a2c" stroke-width="1.5" fill="none"/><rect x="1902.5" y="148.29999999999998" width="9.1" height="9.1" stroke="#d65a2c" stroke-width="1" fill="none"/><rect x="1900.3" y="164.1" width="13.5" height="13.5" stroke="#d65a2c" stroke-width="1.5" fill="none"/><rect x="1902.5" y="166.29999999999998" width="9.1" height="9.1" stroke="#d65a2c" stroke-width="1" fill="none"/><rect x="1918.3" y="146.1" width="13.5" height="13.5" stroke="#d65a2c" stroke-width="1.5" fill="none"/><rect x="1920.5" y="148.29999999999998" width="9.1" height="9.1" stroke="#d65a2c" stroke-width="1" fill="none"/><rect x="1918.3" y="164.1" width="13.5" height="13.5" stroke="#d65a2c" stroke-width="1.5" fill="none"/><rect x="1920.5" y="166.29999999999998" width="9.1" height="9.1" stroke="#d65a2c" stroke-width="1" fill="none"/><rect x="1990.2" y="142.3" width="39.5" height="39.5" stroke="#d6d6d6" stroke-width="2" fill="none"/><rect x="1991" y="143" width="38" height="4.5" fill="#8a8a8a"/><path d="M1990.20 147.80 L2030.00 147.80" stroke="#d6d6d6" stroke-width="1.8" /><path d="M1990.20 160.00 L1996.00 160.00" stroke="#d6d6d6" stroke-width="1.8" /><path d="M2021.00 160.00 L2030.00 160.00" stroke="#d6d6d6" stroke-width="1.8" /><path d="M1990.20 170.30 L1999.00 170.30" stroke="#d6d6d6" stroke-width="1.8" /><path d="M2018.00 170.30 L2030.00 170.30" stroke="#d6d6d6" stroke-width="1.8" /><path d="M2003.20 171.50 L2003.20 182.00" stroke="#d6d6d6" stroke-width="1.8" /><path d="M2017.10 171.50 L2017.10 182.00" stroke="#d6d6d6" stroke-width="1.8" /><circle cx="2008.3" cy="158.9" r="12.5" stroke="#d6d6d6" stroke-width="2" fill="#292929"/><path d="M2017.50 168.00 L2030.00 181.50" stroke="#d6d6d6" stroke-width="2" /><rect x="2001.3" y="156.7" width="3.7" height="7.7" fill="#9a9a9a"/><rect x="2006.9" y="151.2" width="4.3" height="12.8" stroke="#d6d6d6" stroke-width="1.3" fill="none"/><rect x="2011.6" y="153" width="4.1" height="11.4" fill="#4aa3e0"/><path d="M2850.96 254.04 L2857.40 261.16 L2863.84 254.04" stroke="#ffffff" stroke-width="2.0" fill="none"/></svg>
<div style="position:absolute;left:2156.4px;top:142.7px;width:111.8px;height:112.2px;border-radius:50%;background:#ffffff;"></div>
<div style="position:absolute;left:2182.00px;top:173.20px;width:61.00px;height:52.60px;background:#5b5fe8;"></div>
<div style="position:absolute;left:2190.00px;top:180.80px;width:19.30px;height:14.90px;background:#ffffff;"></div>
<div style="position:absolute;left:2190.00px;top:203.40px;width:19.30px;height:14.30px;background:#ffffff;"></div>
<div style="position:absolute;left:2216.30px;top:180.80px;width:19.00px;height:14.90px;background:#ffffff;"></div>
<div style="position:absolute;left:2216.30px;top:203.40px;width:19.00px;height:14.30px;background:#ffffff;"></div>
<div style="position:absolute;left:2292.83px;top:155.43px;font-size:50.29px;line-height:50.29px;font-weight:bold;font-style:normal;color:#ffffff;white-space:pre;transform:scaleX(0.9699);transform-origin:0 0;-webkit-text-stroke:1.3px #ffffff;">FINM</div>
<div style="position:absolute;left:2450.52px;top:155.43px;font-size:50.29px;line-height:50.29px;font-weight:bold;font-style:normal;color:#ffffff;white-space:pre;transform:scaleX(0.8518);transform-origin:0 0;-webkit-text-stroke:1.3px #ffffff;">DELSLAB</div>
<svg style="position:absolute;left:2410.00px;top:150.00px;" width="44" height="52" viewBox="0 0 44 52"><circle cx="21.5" cy="29.9" r="13.6" stroke="#ffffff" stroke-width="8.6" fill="none"/>
<path d="M21.5 8.5 V27.5" stroke="#292929" stroke-width="12" stroke-linecap="round"/>
<path d="M21.5 8.5 V27.5" stroke="#ffffff" stroke-width="8.8" stroke-linecap="round"/></svg>
<div style="position:absolute;left:2291.53px;top:207.19px;font-size:36.63px;line-height:36.63px;font-weight:normal;font-style:normal;color:#ffffff;white-space:pre;">T</div>
<div style="position:absolute;left:2337.34px;top:207.19px;font-size:36.63px;line-height:36.63px;font-weight:normal;font-style:normal;color:#ffffff;white-space:pre;">e</div>
<div style="position:absolute;left:2382.25px;top:207.19px;font-size:36.63px;line-height:36.63px;font-weight:normal;font-style:normal;color:#ffffff;white-space:pre;">m</div>
<div style="position:absolute;left:2437.42px;top:207.19px;font-size:36.63px;line-height:36.63px;font-weight:normal;font-style:normal;color:#ffffff;white-space:pre;">p</div>
<div style="position:absolute;left:2478.23px;top:207.19px;font-size:36.63px;line-height:36.63px;font-weight:normal;font-style:normal;color:#ffffff;white-space:pre;">l</div>
<div style="position:absolute;left:2509.76px;top:207.19px;font-size:36.63px;line-height:36.63px;font-weight:normal;font-style:normal;color:#ffffff;white-space:pre;">a</div>
<div style="position:absolute;left:2552.23px;top:207.19px;font-size:36.63px;line-height:36.63px;font-weight:normal;font-style:normal;color:#ffffff;white-space:pre;">t</div>
<div style="position:absolute;left:2594.09px;top:207.19px;font-size:36.63px;line-height:36.63px;font-weight:normal;font-style:normal;color:#ffffff;white-space:pre;">e</div>
<div style="position:absolute;left:2633.98px;top:207.19px;font-size:36.63px;line-height:36.63px;font-weight:normal;font-style:normal;color:#ffffff;white-space:pre;">s</div>
<div style="position:absolute;left:11.00px;top:277.50px;width:2850.00px;height:22.50px;background:#0a0a0a;"></div>
<div style="position:absolute;left:47.00px;top:278.00px;width:23.00px;height:22.00px;background:#626262;"></div>
<div style="position:absolute;left:47.00px;top:298.60px;width:23.00px;height:2.00px;background:#217346;"></div>
<div style="position:absolute;left:52.31px;top:281.05px;font-size:18.60px;line-height:18.60px;font-weight:normal;font-style:normal;color:#ffffff;white-space:pre;">A</div>
<div style="position:absolute;left:89.03px;top:281.05px;font-size:18.60px;line-height:18.60px;font-weight:normal;font-style:normal;color:#e6e6e6;white-space:pre;">B</div>
<div style="position:absolute;left:120.50px;top:278.00px;width:1.00px;height:22.00px;background:#6a6a6a;"></div>
<div style="position:absolute;left:140.16px;top:281.05px;font-size:18.60px;line-height:18.60px;font-weight:normal;font-style:normal;color:#e6e6e6;white-space:pre;">C</div>
<div style="position:absolute;left:172.50px;top:278.00px;width:1.00px;height:22.00px;background:#6a6a6a;"></div>
<div style="position:absolute;left:191.98px;top:281.05px;font-size:18.60px;line-height:18.60px;font-weight:normal;font-style:normal;color:#e6e6e6;white-space:pre;">D</div>
<div style="position:absolute;left:224.50px;top:278.00px;width:1.00px;height:22.00px;background:#6a6a6a;"></div>
<div style="position:absolute;left:244.44px;top:281.05px;font-size:18.60px;line-height:18.60px;font-weight:normal;font-style:normal;color:#e6e6e6;white-space:pre;">E</div>
<div style="position:absolute;left:276.50px;top:278.00px;width:1.00px;height:22.00px;background:#6a6a6a;"></div>
<div style="position:absolute;left:303.73px;top:281.05px;font-size:18.60px;line-height:18.60px;font-weight:normal;font-style:normal;color:#e6e6e6;white-space:pre;">F</div>
<div style="position:absolute;left:342.10px;top:278.00px;width:1.00px;height:22.00px;background:#6a6a6a;"></div>
<div style="position:absolute;left:361.28px;top:281.05px;font-size:18.60px;line-height:18.60px;font-weight:normal;font-style:normal;color:#e6e6e6;white-space:pre;">G</div>
<div style="position:absolute;left:393.50px;top:278.00px;width:1.00px;height:22.00px;background:#6a6a6a;"></div>
<div style="position:absolute;left:420.78px;top:281.05px;font-size:18.60px;line-height:18.60px;font-weight:normal;font-style:normal;color:#e6e6e6;white-space:pre;">H</div>
<div style="position:absolute;left:460.50px;top:278.00px;width:1.00px;height:22.00px;background:#6a6a6a;"></div>
<div style="position:absolute;left:511.17px;top:281.05px;font-size:18.60px;line-height:18.60px;font-weight:normal;font-style:normal;color:#e6e6e6;white-space:pre;">I</div>
<div style="position:absolute;left:566.00px;top:278.00px;width:1.00px;height:22.00px;background:#6a6a6a;"></div>
<div style="position:absolute;left:623.63px;top:281.05px;font-size:18.60px;line-height:18.60px;font-weight:normal;font-style:normal;color:#e6e6e6;white-space:pre;">J</div>
<div style="position:absolute;left:688.50px;top:278.00px;width:1.00px;height:22.00px;background:#6a6a6a;"></div>
<div style="position:absolute;left:743.64px;top:281.05px;font-size:18.60px;line-height:18.60px;font-weight:normal;font-style:normal;color:#e6e6e6;white-space:pre;">K</div>
<div style="position:absolute;left:811.50px;top:278.00px;width:1.00px;height:22.00px;background:#6a6a6a;"></div>
<div style="position:absolute;left:868.12px;top:281.05px;font-size:18.60px;line-height:18.60px;font-weight:normal;font-style:normal;color:#e6e6e6;white-space:pre;">L</div>
<div style="position:absolute;left:935.00px;top:278.00px;width:1.00px;height:22.00px;background:#6a6a6a;"></div>
<div style="position:absolute;left:989.01px;top:281.05px;font-size:18.60px;line-height:18.60px;font-weight:normal;font-style:normal;color:#e6e6e6;white-space:pre;">M</div>
<div style="position:absolute;left:1057.50px;top:278.00px;width:1.00px;height:22.00px;background:#6a6a6a;"></div>
<div style="position:absolute;left:1112.78px;top:281.05px;font-size:18.60px;line-height:18.60px;font-weight:normal;font-style:normal;color:#e6e6e6;white-space:pre;">N</div>
<div style="position:absolute;left:1180.50px;top:278.00px;width:1.00px;height:22.00px;background:#6a6a6a;"></div>
<div style="position:absolute;left:1235.54px;top:281.05px;font-size:18.60px;line-height:18.60px;font-weight:normal;font-style:normal;color:#e6e6e6;white-space:pre;">O</div>
<div style="position:absolute;left:1304.00px;top:278.00px;width:1.00px;height:22.00px;background:#6a6a6a;"></div>
<div style="position:absolute;left:1310.53px;top:281.05px;font-size:18.60px;line-height:18.60px;font-weight:normal;font-style:normal;color:#e6e6e6;white-space:pre;">P</div>
<div style="position:absolute;left:1329.00px;top:278.00px;width:1.00px;height:22.00px;background:#6a6a6a;"></div>
<div style="position:absolute;left:1364.79px;top:281.05px;font-size:18.60px;line-height:18.60px;font-weight:normal;font-style:normal;color:#e6e6e6;white-space:pre;">Q</div>
<div style="position:absolute;left:1414.00px;top:278.00px;width:1.00px;height:22.00px;background:#6a6a6a;"></div>
<div style="position:absolute;left:1449.70px;top:281.05px;font-size:18.60px;line-height:18.60px;font-weight:normal;font-style:normal;color:#e6e6e6;white-space:pre;">R</div>
<div style="position:absolute;left:1498.50px;top:278.00px;width:1.00px;height:22.00px;background:#6a6a6a;"></div>
<div style="position:absolute;left:1535.54px;top:281.05px;font-size:18.60px;line-height:18.60px;font-weight:normal;font-style:normal;color:#e6e6e6;white-space:pre;">S</div>
<div style="position:absolute;left:1584.00px;top:278.00px;width:1.00px;height:22.00px;background:#6a6a6a;"></div>
<div style="position:absolute;left:1621.38px;top:281.05px;font-size:18.60px;line-height:18.60px;font-weight:normal;font-style:normal;color:#e6e6e6;white-space:pre;">T</div>
<div style="position:absolute;left:1669.10px;top:278.00px;width:1.00px;height:22.00px;background:#6a6a6a;"></div>
<div style="position:absolute;left:1705.33px;top:281.05px;font-size:18.60px;line-height:18.60px;font-weight:normal;font-style:normal;color:#e6e6e6;white-space:pre;">U</div>
<div style="position:absolute;left:1754.00px;top:278.00px;width:1.00px;height:22.00px;background:#6a6a6a;"></div>
<div style="position:absolute;left:1790.81px;top:281.05px;font-size:18.60px;line-height:18.60px;font-weight:normal;font-style:normal;color:#e6e6e6;white-space:pre;">V</div>
<div style="position:absolute;left:1839.00px;top:278.00px;width:1.00px;height:22.00px;background:#6a6a6a;"></div>
<div style="position:absolute;left:1873.16px;top:281.05px;font-size:18.60px;line-height:18.60px;font-weight:normal;font-style:normal;color:#e6e6e6;white-space:pre;">W</div>
<div style="position:absolute;left:1923.90px;top:278.00px;width:1.00px;height:22.00px;background:#6a6a6a;"></div>
<div style="position:absolute;left:1960.47px;top:281.05px;font-size:18.60px;line-height:18.60px;font-weight:normal;font-style:normal;color:#e6e6e6;white-space:pre;">X</div>
<div style="position:absolute;left:2008.50px;top:278.00px;width:1.00px;height:22.00px;background:#6a6a6a;"></div>
<div style="position:absolute;left:2045.31px;top:281.05px;font-size:18.60px;line-height:18.60px;font-weight:normal;font-style:normal;color:#e6e6e6;white-space:pre;">Y</div>
<div style="position:absolute;left:2093.50px;top:278.00px;width:1.00px;height:22.00px;background:#6a6a6a;"></div>
<div style="position:absolute;left:2131.08px;top:281.05px;font-size:18.60px;line-height:18.60px;font-weight:normal;font-style:normal;color:#e6e6e6;white-space:pre;">Z</div>
<div style="position:absolute;left:2179.00px;top:278.00px;width:1.00px;height:22.00px;background:#6a6a6a;"></div>
<div style="position:absolute;left:2209.55px;top:281.05px;font-size:18.60px;line-height:18.60px;font-weight:normal;font-style:normal;color:#e6e6e6;white-space:pre;">AA</div>
<div style="position:absolute;left:2263.90px;top:278.00px;width:1.00px;height:22.00px;background:#6a6a6a;"></div>
<div style="position:absolute;left:2294.92px;top:281.05px;font-size:18.60px;line-height:18.60px;font-weight:normal;font-style:normal;color:#e6e6e6;white-space:pre;">AB</div>
<div style="position:absolute;left:2348.80px;top:278.00px;width:1.00px;height:22.00px;background:#6a6a6a;"></div>
<div style="position:absolute;left:2379.07px;top:281.05px;font-size:18.60px;line-height:18.60px;font-weight:normal;font-style:normal;color:#e6e6e6;white-space:pre;">AC</div>
<div style="position:absolute;left:2433.50px;top:278.00px;width:1.00px;height:22.00px;background:#6a6a6a;"></div>
<div style="position:absolute;left:2464.21px;top:281.05px;font-size:18.60px;line-height:18.60px;font-weight:normal;font-style:normal;color:#e6e6e6;white-space:pre;">AD</div>
<div style="position:absolute;left:2518.90px;top:278.00px;width:1.00px;height:22.00px;background:#6a6a6a;"></div>
<div style="position:absolute;left:2549.68px;top:281.05px;font-size:18.60px;line-height:18.60px;font-weight:normal;font-style:normal;color:#e6e6e6;white-space:pre;">AE</div>
<div style="position:absolute;left:2603.50px;top:278.00px;width:1.00px;height:22.00px;background:#6a6a6a;"></div>
<div style="position:absolute;left:2635.22px;top:281.05px;font-size:18.60px;line-height:18.60px;font-weight:normal;font-style:normal;color:#e6e6e6;white-space:pre;">AF</div>
<div style="position:absolute;left:2689.00px;top:278.00px;width:1.00px;height:22.00px;background:#6a6a6a;"></div>
<div style="position:absolute;left:2718.98px;top:281.05px;font-size:18.60px;line-height:18.60px;font-weight:normal;font-style:normal;color:#e6e6e6;white-space:pre;">AG</div>
<div style="position:absolute;left:2773.50px;top:278.00px;width:1.00px;height:22.00px;background:#6a6a6a;"></div>
<div style="position:absolute;left:2804.56px;top:281.05px;font-size:18.60px;line-height:18.60px;font-weight:normal;font-style:normal;color:#e6e6e6;white-space:pre;">AH</div>
<div style="position:absolute;left:2859.00px;top:278.00px;width:1.00px;height:22.00px;background:#6a6a6a;"></div>
<svg style="position:absolute;left:29.00px;top:282.50px;" width="16" height="15" viewBox="0 0 16 15"><path d="M14.8 0.3 V14.5 H0.5 Z" fill="#6a6a6a"/></svg>
<div style="position:absolute;left:11.00px;top:300.00px;width:36.00px;height:1370.00px;background:#0a0a0a;"></div>
<div style="position:absolute;left:11.00px;top:300.00px;width:36.00px;height:36.00px;background:#6a6a6a;"></div>
<div style="position:absolute;left:46.00px;top:300.00px;width:2.10px;height:36.00px;background:#217346;"></div>
<div style="position:absolute;left:11.00px;top:335.50px;width:36.00px;height:1.00px;background:#6a6a6a;"></div>
<div style="position:absolute;left:23.71px;top:317.82px;font-size:18.17px;line-height:18.17px;font-weight:normal;font-style:normal;color:#ffffff;white-space:pre;">1</div>
<div style="position:absolute;left:11.00px;top:366.50px;width:36.00px;height:1.00px;background:#6a6a6a;"></div>
<div style="position:absolute;left:23.94px;top:348.82px;font-size:18.17px;line-height:18.17px;font-weight:normal;font-style:normal;color:#f0ece4;white-space:pre;">2</div>
<div style="position:absolute;left:11.00px;top:398.50px;width:36.00px;height:1.00px;background:#6a6a6a;"></div>
<div style="position:absolute;left:24.00px;top:380.82px;font-size:18.17px;line-height:18.17px;font-weight:normal;font-style:normal;color:#f0ece4;white-space:pre;">3</div>
<div style="position:absolute;left:11.00px;top:422.00px;width:36.00px;height:1.00px;background:#6a6a6a;"></div>
<div style="position:absolute;left:24.00px;top:404.32px;font-size:18.17px;line-height:18.17px;font-weight:normal;font-style:normal;color:#f0ece4;white-space:pre;">4</div>
<div style="position:absolute;left:11.00px;top:452.90px;width:36.00px;height:1.00px;background:#6a6a6a;"></div>
<div style="position:absolute;left:23.96px;top:435.22px;font-size:18.17px;line-height:18.17px;font-weight:normal;font-style:normal;color:#f0ece4;white-space:pre;">5</div>
<div style="position:absolute;left:11.00px;top:484.90px;width:36.00px;height:1.00px;background:#6a6a6a;"></div>
<div style="position:absolute;left:23.94px;top:467.22px;font-size:18.17px;line-height:18.17px;font-weight:normal;font-style:normal;color:#f0ece4;white-space:pre;">7</div>
<div style="position:absolute;left:11.00px;top:505.50px;width:36.00px;height:1.00px;background:#6a6a6a;"></div>
<div style="position:absolute;left:23.94px;top:487.82px;font-size:18.17px;line-height:18.17px;font-weight:normal;font-style:normal;color:#f0ece4;white-space:pre;">8</div>
<div style="position:absolute;left:11.00px;top:538.50px;width:36.00px;height:1.00px;background:#6a6a6a;"></div>
<div style="position:absolute;left:23.96px;top:520.82px;font-size:18.17px;line-height:18.17px;font-weight:normal;font-style:normal;color:#f0ece4;white-space:pre;">9</div>
<div style="position:absolute;left:11.00px;top:571.50px;width:36.00px;height:1.00px;background:#6a6a6a;"></div>
<div style="position:absolute;left:18.58px;top:553.82px;font-size:18.17px;line-height:18.17px;font-weight:normal;font-style:normal;color:#f0ece4;white-space:pre;">10</div>
<div style="position:absolute;left:11.00px;top:604.50px;width:36.00px;height:1.00px;background:#6a6a6a;"></div>
<div style="position:absolute;left:19.33px;top:586.82px;font-size:18.17px;line-height:18.17px;font-weight:normal;font-style:normal;color:#f0ece4;white-space:pre;">11</div>
<div style="position:absolute;left:11.00px;top:637.50px;width:36.00px;height:1.00px;background:#6a6a6a;"></div>
<div style="position:absolute;left:18.67px;top:619.82px;font-size:18.17px;line-height:18.17px;font-weight:normal;font-style:normal;color:#f0ece4;white-space:pre;">12</div>
<div style="position:absolute;left:11.00px;top:670.50px;width:36.00px;height:1.00px;background:#6a6a6a;"></div>
<div style="position:absolute;left:18.62px;top:652.82px;font-size:18.17px;line-height:18.17px;font-weight:normal;font-style:normal;color:#f0ece4;white-space:pre;">13</div>
<div style="position:absolute;left:11.00px;top:703.50px;width:36.00px;height:1.00px;background:#6a6a6a;"></div>
<div style="position:absolute;left:18.48px;top:685.82px;font-size:18.17px;line-height:18.17px;font-weight:normal;font-style:normal;color:#f0ece4;white-space:pre;">14</div>
<div style="position:absolute;left:11.00px;top:736.50px;width:36.00px;height:1.00px;background:#6a6a6a;"></div>
<div style="position:absolute;left:18.60px;top:718.82px;font-size:18.17px;line-height:18.17px;font-weight:normal;font-style:normal;color:#f0ece4;white-space:pre;">15</div>
<div style="position:absolute;left:11.00px;top:770.00px;width:36.00px;height:1.00px;background:#6a6a6a;"></div>
<div style="position:absolute;left:18.62px;top:752.32px;font-size:18.17px;line-height:18.17px;font-weight:normal;font-style:normal;color:#f0ece4;white-space:pre;">16</div>
<div style="position:absolute;left:11.00px;top:802.80px;width:36.00px;height:1.00px;background:#6a6a6a;"></div>
<div style="position:absolute;left:18.67px;top:785.12px;font-size:18.17px;line-height:18.17px;font-weight:normal;font-style:normal;color:#f0ece4;white-space:pre;">17</div>
<div style="position:absolute;left:11.00px;top:835.70px;width:36.00px;height:1.00px;background:#6a6a6a;"></div>
<div style="position:absolute;left:18.60px;top:818.02px;font-size:18.17px;line-height:18.17px;font-weight:normal;font-style:normal;color:#f0ece4;white-space:pre;">18</div>
<div style="position:absolute;left:11.00px;top:868.50px;width:36.00px;height:1.00px;background:#6a6a6a;"></div>
<div style="position:absolute;left:18.64px;top:850.82px;font-size:18.17px;line-height:18.17px;font-weight:normal;font-style:normal;color:#f0ece4;white-space:pre;">19</div>
<div style="position:absolute;left:11.00px;top:901.80px;width:36.00px;height:1.00px;background:#6a6a6a;"></div>
<div style="position:absolute;left:18.80px;top:884.12px;font-size:18.17px;line-height:18.17px;font-weight:normal;font-style:normal;color:#f0ece4;white-space:pre;">20</div>
<div style="position:absolute;left:11.00px;top:934.80px;width:36.00px;height:1.00px;background:#6a6a6a;"></div>
<div style="position:absolute;left:18.89px;top:917.12px;font-size:18.17px;line-height:18.17px;font-weight:normal;font-style:normal;color:#f0ece4;white-space:pre;">21</div>
<div style="position:absolute;left:11.00px;top:967.70px;width:36.00px;height:1.00px;background:#6a6a6a;"></div>
<div style="position:absolute;left:18.89px;top:950.02px;font-size:18.17px;line-height:18.17px;font-weight:normal;font-style:normal;color:#f0ece4;white-space:pre;">22</div>
<div style="position:absolute;left:11.00px;top:1000.50px;width:36.00px;height:1.00px;background:#6a6a6a;"></div>
<div style="position:absolute;left:18.85px;top:982.82px;font-size:18.17px;line-height:18.17px;font-weight:normal;font-style:normal;color:#f0ece4;white-space:pre;">23</div>
<div style="position:absolute;left:11.00px;top:1033.50px;width:36.00px;height:1.00px;background:#6a6a6a;"></div>
<div style="position:absolute;left:18.71px;top:1015.82px;font-size:18.17px;line-height:18.17px;font-weight:normal;font-style:normal;color:#f0ece4;white-space:pre;">24</div>
<div style="position:absolute;left:11.00px;top:1063.50px;width:36.00px;height:1.00px;background:#6a6a6a;"></div>
<div style="position:absolute;left:18.83px;top:1045.82px;font-size:18.17px;line-height:18.17px;font-weight:normal;font-style:normal;color:#f0ece4;white-space:pre;">25</div>
<div style="position:absolute;left:11.00px;top:1096.80px;width:36.00px;height:1.00px;background:#6a6a6a;"></div>
<div style="position:absolute;left:18.85px;top:1079.12px;font-size:18.17px;line-height:18.17px;font-weight:normal;font-style:normal;color:#f0ece4;white-space:pre;">26</div>
<div style="position:absolute;left:11.00px;top:1133.50px;width:36.00px;height:1.00px;background:#6a6a6a;"></div>
<div style="position:absolute;left:18.87px;top:1115.82px;font-size:18.17px;line-height:18.17px;font-weight:normal;font-style:normal;color:#f0ece4;white-space:pre;">29</div>
<div style="position:absolute;left:11.00px;top:1165.50px;width:36.00px;height:1.00px;background:#6a6a6a;"></div>
<div style="position:absolute;left:19.01px;top:1147.82px;font-size:18.17px;line-height:18.17px;font-weight:normal;font-style:normal;color:#f0ece4;white-space:pre;">31</div>
<div style="position:absolute;left:11.00px;top:1194.50px;width:36.00px;height:1.00px;background:#6a6a6a;"></div>
<div style="position:absolute;left:19.01px;top:1176.82px;font-size:18.17px;line-height:18.17px;font-weight:normal;font-style:normal;color:#f0ece4;white-space:pre;">32</div>
<div style="position:absolute;left:11.00px;top:1213.50px;width:36.00px;height:1.00px;background:#6a6a6a;"></div>
<div style="position:absolute;left:18.96px;top:1195.82px;font-size:18.17px;line-height:18.17px;font-weight:normal;font-style:normal;color:#f0ece4;white-space:pre;">33</div>
<div style="position:absolute;left:11.00px;top:1235.50px;width:36.00px;height:1.00px;background:#6a6a6a;"></div>
<div style="position:absolute;left:18.83px;top:1217.82px;font-size:18.17px;line-height:18.17px;font-weight:normal;font-style:normal;color:#f0ece4;white-space:pre;">34</div>
<div style="position:absolute;left:11.00px;top:1257.50px;width:36.00px;height:1.00px;background:#6a6a6a;"></div>
<div style="position:absolute;left:18.94px;top:1239.82px;font-size:18.17px;line-height:18.17px;font-weight:normal;font-style:normal;color:#f0ece4;white-space:pre;">35</div>
<div style="position:absolute;left:11.00px;top:1285.50px;width:36.00px;height:1.00px;background:#6a6a6a;"></div>
<div style="position:absolute;left:18.96px;top:1267.82px;font-size:18.17px;line-height:18.17px;font-weight:normal;font-style:normal;color:#f0ece4;white-space:pre;">36</div>
<div style="position:absolute;left:11.00px;top:1313.50px;width:36.00px;height:1.00px;background:#6a6a6a;"></div>
<div style="position:absolute;left:19.01px;top:1295.82px;font-size:18.17px;line-height:18.17px;font-weight:normal;font-style:normal;color:#f0ece4;white-space:pre;">37</div>
<div style="position:absolute;left:11.00px;top:1335.50px;width:36.00px;height:1.00px;background:#6a6a6a;"></div>
<div style="position:absolute;left:18.94px;top:1317.82px;font-size:18.17px;line-height:18.17px;font-weight:normal;font-style:normal;color:#f0ece4;white-space:pre;">38</div>
<div style="position:absolute;left:11.00px;top:1363.50px;width:36.00px;height:1.00px;background:#6a6a6a;"></div>
<div style="position:absolute;left:18.98px;top:1345.82px;font-size:18.17px;line-height:18.17px;font-weight:normal;font-style:normal;color:#f0ece4;white-space:pre;">39</div>
<div style="position:absolute;left:11.00px;top:1391.50px;width:36.00px;height:1.00px;background:#6a6a6a;"></div>
<div style="position:absolute;left:19.05px;top:1373.82px;font-size:18.17px;line-height:18.17px;font-weight:normal;font-style:normal;color:#f0ece4;white-space:pre;">40</div>
<div style="position:absolute;left:11.00px;top:1413.50px;width:36.00px;height:1.00px;background:#6a6a6a;"></div>
<div style="position:absolute;left:19.14px;top:1395.82px;font-size:18.17px;line-height:18.17px;font-weight:normal;font-style:normal;color:#f0ece4;white-space:pre;">41</div>
<div style="position:absolute;left:11.00px;top:1435.70px;width:36.00px;height:1.00px;background:#6a6a6a;"></div>
<div style="position:absolute;left:19.14px;top:1418.02px;font-size:18.17px;line-height:18.17px;font-weight:normal;font-style:normal;color:#f0ece4;white-space:pre;">42</div>
<div style="position:absolute;left:11.00px;top:1460.90px;width:36.00px;height:1.00px;background:#6a6a6a;"></div>
<div style="position:absolute;left:19.10px;top:1443.22px;font-size:18.17px;line-height:18.17px;font-weight:normal;font-style:normal;color:#f0ece4;white-space:pre;">43</div>
<div style="position:absolute;left:11.00px;top:1488.50px;width:36.00px;height:1.00px;background:#6a6a6a;"></div>
<div style="position:absolute;left:18.96px;top:1470.82px;font-size:18.17px;line-height:18.17px;font-weight:normal;font-style:normal;color:#f0ece4;white-space:pre;">44</div>
<div style="position:absolute;left:11.00px;top:1511.00px;width:36.00px;height:1.00px;background:#6a6a6a;"></div>
<div style="position:absolute;left:19.08px;top:1493.32px;font-size:18.17px;line-height:18.17px;font-weight:normal;font-style:normal;color:#f0ece4;white-space:pre;">45</div>
<div style="position:absolute;left:11.00px;top:1532.50px;width:36.00px;height:1.00px;background:#6a6a6a;"></div>
<div style="position:absolute;left:19.10px;top:1514.82px;font-size:18.17px;line-height:18.17px;font-weight:normal;font-style:normal;color:#f0ece4;white-space:pre;">46</div>
<div style="position:absolute;left:11.00px;top:1560.70px;width:36.00px;height:1.00px;background:#6a6a6a;"></div>
<div style="position:absolute;left:19.14px;top:1543.02px;font-size:18.17px;line-height:18.17px;font-weight:normal;font-style:normal;color:#f0ece4;white-space:pre;">47</div>
<div style="position:absolute;left:11.00px;top:1588.50px;width:36.00px;height:1.00px;background:#6a6a6a;"></div>
<div style="position:absolute;left:19.08px;top:1570.82px;font-size:18.17px;line-height:18.17px;font-weight:normal;font-style:normal;color:#f0ece4;white-space:pre;">48</div>
<div style="position:absolute;left:11.00px;top:1610.30px;width:36.00px;height:1.00px;background:#6a6a6a;"></div>
<div style="position:absolute;left:19.12px;top:1592.62px;font-size:18.17px;line-height:18.17px;font-weight:normal;font-style:normal;color:#f0ece4;white-space:pre;">49</div>
<div style="position:absolute;left:11.00px;top:1638.50px;width:36.00px;height:1.00px;background:#6a6a6a;"></div>
<div style="position:absolute;left:18.89px;top:1620.82px;font-size:18.17px;line-height:18.17px;font-weight:normal;font-style:normal;color:#f0ece4;white-space:pre;">50</div>
<div style="position:absolute;left:11.00px;top:1666.50px;width:36.00px;height:1.00px;background:#6a6a6a;"></div>
<div style="position:absolute;left:18.98px;top:1648.82px;font-size:18.17px;line-height:18.17px;font-weight:normal;font-style:normal;color:#f0ece4;white-space:pre;">51</div>
<div style="position:absolute;left:11.00px;top:456.70px;width:36.00px;height:1.00px;background:#6a6a6a;"></div>
<div style="position:absolute;left:11.00px;top:1101.50px;width:36.00px;height:1.00px;background:#6a6a6a;"></div>
<div style="position:absolute;left:11.00px;top:1137.20px;width:36.00px;height:1.00px;background:#6a6a6a;"></div>
<div style="position:absolute;left:11.00px;top:1667.00px;width:36.00px;height:3.00px;background:#6a6a6a;"></div>
<div style="position:absolute;left:47.00px;top:300.00px;width:2813.00px;height:1370.00px;background:#ffffff;"></div>
<div style="position:absolute;left:47.00px;top:422.00px;width:2813.00px;height:1.20px;background:#9a9a9a;"></div>
<div style="position:absolute;left:46.80px;top:279.00px;width:1.00px;height:21.00px;background:#9a9a9a;"></div>
<div style="position:absolute;left:69.50px;top:279.00px;width:1.00px;height:21.00px;background:#9a9a9a;"></div>
<div style="position:absolute;left:11.00px;top:335.30px;width:35.00px;height:1.00px;background:#b0b0b0;"></div>
<div style="position:absolute;left:11.00px;top:299.60px;width:35.00px;height:1.00px;background:#8a8a8a;"></div>
<div style="position:absolute;left:46.00px;top:300.00px;width:2.10px;height:36.00px;background:#217346;"></div>
<div style="position:absolute;left:11.00px;top:422.00px;width:36.00px;height:1.20px;background:#9a9a9a;"></div>
<div style="position:absolute;left:74.01px;top:303.06px;font-size:32.41px;line-height:32.41px;font-weight:bold;font-style:normal;color:#222222;white-space:pre;transform:scaleX(0.9918);transform-origin:0 0;-webkit-text-stroke:0.35px #222222;">Breakeven Analysis</div>
<div style="position:absolute;left:74.72px;top:340.06px;font-size:26.74px;line-height:26.74px;font-weight:bold;font-style:normal;color:#000000;white-space:pre;transform:scaleX(1.0121);transform-origin:0 0;-webkit-text-stroke:0.35px #000000;">ABC Company Inc.</div>
<div style="position:absolute;left:72.65px;top:374.92px;font-size:18.17px;line-height:18.17px;font-weight:bold;font-style:normal;color:#3a7be0;white-space:pre;transform:scaleX(1.0299);transform-origin:0 0;-webkit-text-stroke:0.35px #3a7be0;">Go to Table of Contents</div>
<div style="position:absolute;left:73.20px;top:391.00px;width:209.60px;height:1.70px;background:#3a7be0;"></div>
<div style="position:absolute;left:70.00px;top:422.70px;width:496.60px;height:29.90px;background:#4a4fd1;"></div>
<div style="position:absolute;left:70.00px;top:457.00px;width:496.60px;height:28.60px;background:#4bb2e6;"></div>
<div style="position:absolute;left:225.36px;top:426.19px;font-size:25.29px;line-height:25.29px;font-weight:bold;font-style:normal;color:#fff;white-space:pre;transform:scaleX(0.9968);transform-origin:0 0;-webkit-text-stroke:0.35px #fff;">Breakeven date</div>
<div style="position:absolute;left:279.83px;top:461.00px;font-size:22.09px;line-height:22.09px;font-weight:bold;font-style:normal;color:#fff;white-space:pre;transform:scaleX(1.0898);transform-origin:0 0;-webkit-text-stroke:0.35px #fff;">Feb-27</div>
<div style="position:absolute;left:812.80px;top:422.70px;width:492.00px;height:29.90px;background:#4a4fd1;"></div>
<div style="position:absolute;left:812.80px;top:457.00px;width:492.00px;height:28.60px;background:#4bb2e6;"></div>
<div style="position:absolute;left:931.85px;top:426.19px;font-size:25.29px;line-height:25.29px;font-weight:bold;font-style:normal;color:#fff;white-space:pre;-webkit-text-stroke:0.35px #fff;">Months to breakeven</div>
<div style="position:absolute;left:1039.94px;top:461.00px;font-size:22.09px;line-height:22.09px;font-weight:bold;font-style:normal;color:#fff;white-space:pre;transform:scaleX(1.1305);transform-origin:0 0;-webkit-text-stroke:0.35px #fff;">14</div>
<div style="position:absolute;left:69.50px;top:506.30px;width:1235.30px;height:33.30px;background:#4a4fd1;"></div>
<div style="position:absolute;left:520.43px;top:510.74px;font-size:26.89px;line-height:26.89px;font-weight:bold;font-style:normal;color:#fff;white-space:pre;transform:scaleX(1.0691);transform-origin:0 0;-webkit-text-stroke:0.35px #fff;">Breakeven Chart ($&#x27;000)</div>
<div style="position:absolute;left:89.50px;top:940.00px;width:1185.70px;height:1.00px;background:#5aaad8;"></div>
<div style="position:absolute;left:89.50px;top:902.00px;width:1185.70px;height:1.00px;background:#5aaad8;"></div>
<div style="position:absolute;left:89.50px;top:865.00px;width:1185.70px;height:1.00px;background:#5aaad8;"></div>
<div style="position:absolute;left:89.50px;top:827.00px;width:1185.70px;height:1.00px;background:#5aaad8;"></div>
<div style="position:absolute;left:89.50px;top:790.00px;width:1185.70px;height:1.00px;background:#5aaad8;"></div>
<div style="position:absolute;left:89.50px;top:753.00px;width:1185.70px;height:1.00px;background:#5aaad8;"></div>
<div style="position:absolute;left:89.50px;top:715.00px;width:1185.70px;height:1.00px;background:#5aaad8;"></div>
<div style="position:absolute;left:89.50px;top:678.00px;width:1185.70px;height:1.00px;background:#5aaad8;"></div>
<div style="position:absolute;left:89.50px;top:641.00px;width:1185.70px;height:1.00px;background:#5aaad8;"></div>
<div style="position:absolute;left:89.50px;top:603.00px;width:1185.70px;height:1.00px;background:#5aaad8;"></div>
<div style="position:absolute;left:138.43px;top:899.11px;width:53.28px;height:26.50px;background:#ffffff;"></div>
<div style="position:absolute;left:229.45px;top:874.41px;width:53.23px;height:26.50px;background:#ffffff;"></div>
<div style="position:absolute;left:367.38px;top:850.01px;width:69.65px;height:26.50px;background:#ffffff;"></div>
<div style="position:absolute;left:458.16px;top:844.10px;width:70.10px;height:26.50px;background:#ffffff;"></div>
<div style="position:absolute;left:604.40px;top:789.98px;width:69.90px;height:26.50px;background:#ffffff;"></div>
<div style="position:absolute;left:695.63px;top:817.53px;width:69.45px;height:26.50px;background:#ffffff;"></div>
<div style="position:absolute;left:841.44px;top:709.14px;width:70.10px;height:26.50px;background:#ffffff;"></div>
<div style="position:absolute;left:932.39px;top:787.66px;width:70.21px;height:26.50px;background:#ffffff;"></div>
<div style="position:absolute;left:1078.43px;top:620.67px;width:70.41px;height:26.50px;background:#ffffff;"></div>
<div style="position:absolute;left:1169.63px;top:759.82px;width:70.00px;height:26.50px;background:#ffffff;"></div>
<div style="position:absolute;left:117.57px;top:932.91px;width:91.00px;height:44.09px;background:#4bb2e6;"></div>
<div style="position:absolute;left:208.57px;top:908.21px;width:91.00px;height:68.79px;background:#ffc000;"></div>
<div style="position:absolute;left:354.71px;top:883.81px;width:91.00px;height:93.19px;background:#4bb2e6;"></div>
<div style="position:absolute;left:445.71px;top:877.90px;width:91.00px;height:99.10px;background:#ffc000;"></div>
<div style="position:absolute;left:591.85px;top:823.78px;width:91.00px;height:153.22px;background:#4bb2e6;"></div>
<div style="position:absolute;left:682.85px;top:851.33px;width:91.00px;height:125.67px;background:#ffc000;"></div>
<div style="position:absolute;left:828.99px;top:742.94px;width:91.00px;height:234.06px;background:#4bb2e6;"></div>
<div style="position:absolute;left:919.99px;top:821.46px;width:91.00px;height:155.54px;background:#ffc000;"></div>
<div style="position:absolute;left:1066.13px;top:654.47px;width:91.00px;height:322.53px;background:#4bb2e6;"></div>
<div style="position:absolute;left:1157.13px;top:793.62px;width:91.00px;height:183.38px;background:#ffc000;"></div>
<div style="position:absolute;left:89.50px;top:977.00px;width:1185.70px;height:1.00px;background:#5aaad8;"></div>
<div style="position:absolute;left:90.00px;top:977.00px;width:1.00px;height:6.50px;background:#5aaad8;"></div>
<div style="position:absolute;left:327.00px;top:977.00px;width:1.00px;height:6.50px;background:#5aaad8;"></div>
<div style="position:absolute;left:564.00px;top:977.00px;width:1.00px;height:6.50px;background:#5aaad8;"></div>
<div style="position:absolute;left:801.00px;top:977.00px;width:1.00px;height:6.50px;background:#5aaad8;"></div>
<div style="position:absolute;left:1038.00px;top:977.00px;width:1.00px;height:6.50px;background:#5aaad8;"></div>
<div style="position:absolute;left:1275.00px;top:977.00px;width:1.00px;height:6.50px;background:#5aaad8;"></div>
<div style="position:absolute;left:148.32px;top:904.19px;font-size:20.35px;line-height:20.35px;font-weight:bold;font-style:normal;color:#111111;white-space:pre;transform:scaleX(0.9900);transform-origin:0 0;-webkit-text-stroke:0.35px #111111;">589</div>
<div style="position:absolute;left:239.30px;top:879.49px;font-size:20.35px;line-height:20.35px;font-weight:bold;font-style:normal;color:#111111;white-space:pre;transform:scaleX(0.9900);transform-origin:0 0;-webkit-text-stroke:0.35px #111111;">919</div>
<div style="position:absolute;left:376.63px;top:855.09px;font-size:20.35px;line-height:20.35px;font-weight:bold;font-style:normal;color:#111111;white-space:pre;transform:scaleX(0.9900);transform-origin:0 0;-webkit-text-stroke:0.35px #111111;">1,245</div>
<div style="position:absolute;left:467.40px;top:849.17px;font-size:20.35px;line-height:20.35px;font-weight:bold;font-style:normal;color:#111111;white-space:pre;transform:scaleX(0.9900);transform-origin:0 0;-webkit-text-stroke:0.35px #111111;">1,324</div>
<div style="position:absolute;left:614.24px;top:795.06px;font-size:20.35px;line-height:20.35px;font-weight:bold;font-style:normal;color:#111111;white-space:pre;transform:scaleX(0.9900);transform-origin:0 0;-webkit-text-stroke:0.35px #111111;">2,047</div>
<div style="position:absolute;left:704.87px;top:822.60px;font-size:20.35px;line-height:20.35px;font-weight:bold;font-style:normal;color:#111111;white-space:pre;transform:scaleX(0.9900);transform-origin:0 0;-webkit-text-stroke:0.35px #111111;">1,679</div>
<div style="position:absolute;left:851.48px;top:714.22px;font-size:20.35px;line-height:20.35px;font-weight:bold;font-style:normal;color:#111111;white-space:pre;transform:scaleX(0.9900);transform-origin:0 0;-webkit-text-stroke:0.35px #111111;">3,127</div>
<div style="position:absolute;left:942.23px;top:792.74px;font-size:20.35px;line-height:20.35px;font-weight:bold;font-style:normal;color:#111111;white-space:pre;transform:scaleX(0.9900);transform-origin:0 0;-webkit-text-stroke:0.35px #111111;">2,078</div>
<div style="position:absolute;left:1088.62px;top:625.75px;font-size:20.35px;line-height:20.35px;font-weight:bold;font-style:normal;color:#111111;white-space:pre;transform:scaleX(0.9900);transform-origin:0 0;-webkit-text-stroke:0.35px #111111;">4,309</div>
<div style="position:absolute;left:1179.47px;top:764.89px;font-size:20.35px;line-height:20.35px;font-weight:bold;font-style:normal;color:#111111;white-space:pre;transform:scaleX(0.9900);transform-origin:0 0;-webkit-text-stroke:0.35px #111111;">2,450</div>
<div style="position:absolute;left:182.87px;top:1024.91px;font-size:22.67px;line-height:22.67px;font-weight:bold;font-style:normal;color:#111111;white-space:pre;-webkit-text-stroke:0.35px #111111;">2026</div>
<div style="position:absolute;left:420.13px;top:1024.91px;font-size:22.67px;line-height:22.67px;font-weight:bold;font-style:normal;color:#111111;white-space:pre;-webkit-text-stroke:0.35px #111111;">2027</div>
<div style="position:absolute;left:657.10px;top:1024.91px;font-size:22.67px;line-height:22.67px;font-weight:bold;font-style:normal;color:#111111;white-space:pre;-webkit-text-stroke:0.35px #111111;">2028</div>
<div style="position:absolute;left:894.32px;top:1024.91px;font-size:22.67px;line-height:22.67px;font-weight:bold;font-style:normal;color:#111111;white-space:pre;-webkit-text-stroke:0.35px #111111;">2029</div>
<div style="position:absolute;left:1131.49px;top:1024.91px;font-size:22.67px;line-height:22.67px;font-weight:bold;font-style:normal;color:#111111;white-space:pre;-webkit-text-stroke:0.35px #111111;">2030</div>
<div style="position:absolute;left:314.30px;top:566.20px;width:11.70px;height:11.60px;background:#4bb2e6;"></div>
<div style="position:absolute;left:330.68px;top:561.48px;font-size:22.82px;line-height:22.82px;font-weight:bold;font-style:normal;color:#111111;white-space:pre;transform:scaleX(1.0250);transform-origin:0 0;-webkit-text-stroke:0.35px #111111;">Revenue</div>
<div style="position:absolute;left:649.80px;top:566.20px;width:11.20px;height:11.60px;background:#ffc000;"></div>
<div style="position:absolute;left:667.28px;top:561.48px;font-size:22.82px;line-height:22.82px;font-weight:bold;font-style:normal;color:#111111;white-space:pre;transform:scaleX(1.0227);transform-origin:0 0;-webkit-text-stroke:0.35px #111111;">Revenue Breakeven level (Annual)</div>
<div style="position:absolute;left:69.00px;top:1064.20px;width:1235.80px;height:33.00px;background:#4a4fd1;"></div>
<div style="position:absolute;left:482.15px;top:1069.14px;font-size:26.89px;line-height:26.89px;font-weight:bold;font-style:normal;color:#fff;white-space:pre;transform:scaleX(1.0600);transform-origin:0 0;-webkit-text-stroke:0.35px #fff;">Breakeven Calculation ($&#x27;000)</div>
<div style="position:absolute;left:70.00px;top:1102.50px;width:1234.30px;height:30.90px;background:#6b73e6;"></div>
<div style="position:absolute;left:688.80px;top:1102.50px;width:1.60px;height:30.90px;background:#ffffff;"></div>
<div style="position:absolute;left:811.70px;top:1102.50px;width:1.60px;height:30.90px;background:#ffffff;"></div>
<div style="position:absolute;left:935.00px;top:1102.50px;width:1.60px;height:30.90px;background:#ffffff;"></div>
<div style="position:absolute;left:1057.60px;top:1102.50px;width:1.60px;height:30.90px;background:#ffffff;"></div>
<div style="position:absolute;left:1180.50px;top:1102.50px;width:1.60px;height:30.90px;background:#ffffff;"></div>
<div style="position:absolute;left:79.87px;top:1109.46px;font-size:19.19px;line-height:19.19px;font-weight:bold;font-style:normal;color:#fff;white-space:pre;transform:scaleX(0.9845);transform-origin:0 0;-webkit-text-stroke:0.35px #fff;">Fiscal Year</div>
<div style="position:absolute;left:729.27px;top:1109.81px;font-size:18.90px;line-height:18.90px;font-weight:bold;font-style:normal;color:#ffffff;white-space:pre;transform:scaleX(1.0730);transform-origin:0 0;-webkit-text-stroke:0.35px #ffffff;">2026</div>
<div style="position:absolute;left:852.57px;top:1109.81px;font-size:18.90px;line-height:18.90px;font-weight:bold;font-style:normal;color:#ffffff;white-space:pre;transform:scaleX(1.0730);transform-origin:0 0;-webkit-text-stroke:0.35px #ffffff;">2027</div>
<div style="position:absolute;left:975.32px;top:1109.81px;font-size:18.90px;line-height:18.90px;font-weight:bold;font-style:normal;color:#ffffff;white-space:pre;transform:scaleX(1.0730);transform-origin:0 0;-webkit-text-stroke:0.35px #ffffff;">2028</div>
<div style="position:absolute;left:1098.20px;top:1109.81px;font-size:18.90px;line-height:18.90px;font-weight:bold;font-style:normal;color:#ffffff;white-space:pre;transform:scaleX(1.0730);transform-origin:0 0;-webkit-text-stroke:0.35px #ffffff;">2029</div>
<div style="position:absolute;left:1221.42px;top:1109.81px;font-size:18.90px;line-height:18.90px;font-weight:bold;font-style:normal;color:#ffffff;white-space:pre;transform:scaleX(1.0730);transform-origin:0 0;-webkit-text-stroke:0.35px #ffffff;">2030</div>
<div style="position:absolute;left:69.00px;top:1139.20px;width:1235.80px;height:26.40px;background:#4bb2e6;"></div>
<div style="position:absolute;left:73.59px;top:1143.03px;font-size:20.64px;line-height:20.64px;font-weight:bold;font-style:normal;color:#ffffff;white-space:pre;transform:scaleX(1.0480);transform-origin:0 0;-webkit-text-stroke:0.35px #ffffff;">Revenue Breakeven level (Annual)</div>
<div style="position:absolute;left:767.40px;top:1144.51px;font-size:18.90px;line-height:18.90px;font-weight:bold;font-style:normal;color:#ffffff;white-space:pre;transform:scaleX(1.0730);transform-origin:0 0;-webkit-text-stroke:0.35px #ffffff;">919</div>
<div style="position:absolute;left:873.31px;top:1144.51px;font-size:18.90px;line-height:18.90px;font-weight:bold;font-style:normal;color:#ffffff;white-space:pre;transform:scaleX(1.0730);transform-origin:0 0;-webkit-text-stroke:0.35px #ffffff;">1,324</div>
<div style="position:absolute;left:996.47px;top:1144.51px;font-size:18.90px;line-height:18.90px;font-weight:bold;font-style:normal;color:#ffffff;white-space:pre;transform:scaleX(1.0730);transform-origin:0 0;-webkit-text-stroke:0.35px #ffffff;">1,679</div>
<div style="position:absolute;left:1119.32px;top:1144.51px;font-size:18.90px;line-height:18.90px;font-weight:bold;font-style:normal;color:#ffffff;white-space:pre;transform:scaleX(1.0730);transform-origin:0 0;-webkit-text-stroke:0.35px #ffffff;">2,078</div>
<div style="position:absolute;left:1243.02px;top:1144.51px;font-size:18.90px;line-height:18.90px;font-weight:bold;font-style:normal;color:#ffffff;white-space:pre;transform:scaleX(1.0730);transform-origin:0 0;-webkit-text-stroke:0.35px #ffffff;">2,450</div>
<div style="position:absolute;left:69.00px;top:1167.10px;width:1235.80px;height:27.20px;background:#4bb2e6;"></div>
<div style="position:absolute;left:73.59px;top:1171.53px;font-size:20.64px;line-height:20.64px;font-weight:bold;font-style:normal;color:#ffffff;white-space:pre;transform:scaleX(1.0520);transform-origin:0 0;-webkit-text-stroke:0.35px #ffffff;">Revenue Breakeven level (Monthly)</div>
<div style="position:absolute;left:778.86px;top:1173.01px;font-size:18.90px;line-height:18.90px;font-weight:bold;font-style:normal;color:#ffffff;white-space:pre;transform:scaleX(1.0730);transform-origin:0 0;-webkit-text-stroke:0.35px #ffffff;">77</div>
<div style="position:absolute;left:892.07px;top:1173.01px;font-size:18.90px;line-height:18.90px;font-weight:bold;font-style:normal;color:#ffffff;white-space:pre;transform:scaleX(1.0730);transform-origin:0 0;-webkit-text-stroke:0.35px #ffffff;">110</div>
<div style="position:absolute;left:1013.45px;top:1173.01px;font-size:18.90px;line-height:18.90px;font-weight:bold;font-style:normal;color:#ffffff;white-space:pre;transform:scaleX(1.0730);transform-origin:0 0;-webkit-text-stroke:0.35px #ffffff;">140</div>
<div style="position:absolute;left:1136.35px;top:1173.01px;font-size:18.90px;line-height:18.90px;font-weight:bold;font-style:normal;color:#ffffff;white-space:pre;transform:scaleX(1.0730);transform-origin:0 0;-webkit-text-stroke:0.35px #ffffff;">173</div>
<div style="position:absolute;left:1259.24px;top:1173.01px;font-size:18.90px;line-height:18.90px;font-weight:bold;font-style:normal;color:#ffffff;white-space:pre;transform:scaleX(1.0730);transform-origin:0 0;-webkit-text-stroke:0.35px #ffffff;">204</div>
<div style="position:absolute;left:88.72px;top:1217.84px;font-size:18.02px;line-height:18.02px;font-weight:normal;font-style:normal;color:#222222;white-space:pre;transform:scaleX(0.9552);transform-origin:0 0;">Revenue</div>
<div style="position:absolute;left:771.35px;top:1217.72px;font-size:18.17px;line-height:18.17px;font-weight:normal;font-style:normal;color:#222222;white-space:pre;transform:scaleX(0.9890);transform-origin:0 0;">589</div>
<div style="position:absolute;left:879.75px;top:1217.72px;font-size:18.17px;line-height:18.17px;font-weight:normal;font-style:normal;color:#222222;white-space:pre;transform:scaleX(0.9890);transform-origin:0 0;">1,245</div>
<div style="position:absolute;left:1002.39px;top:1217.72px;font-size:18.17px;line-height:18.17px;font-weight:normal;font-style:normal;color:#222222;white-space:pre;transform:scaleX(0.9890);transform-origin:0 0;">2,047</div>
<div style="position:absolute;left:1125.39px;top:1217.72px;font-size:18.17px;line-height:18.17px;font-weight:normal;font-style:normal;color:#222222;white-space:pre;transform:scaleX(0.9890);transform-origin:0 0;">3,127</div>
<div style="position:absolute;left:1248.84px;top:1217.72px;font-size:18.17px;line-height:18.17px;font-weight:normal;font-style:normal;color:#222222;white-space:pre;transform:scaleX(0.9890);transform-origin:0 0;">4,309</div>
<div style="position:absolute;left:89.30px;top:1239.19px;font-size:17.73px;line-height:17.73px;font-weight:normal;font-style:normal;color:#222222;white-space:pre;transform:scaleX(0.9043);transform-origin:0 0;">COGS</div>
<div style="position:absolute;left:777.14px;top:1238.82px;font-size:18.17px;line-height:18.17px;font-weight:normal;font-style:normal;color:#222222;white-space:pre;transform:scaleX(0.9890);transform-origin:0 0;">(21)</div>
<div style="position:absolute;left:900.64px;top:1238.82px;font-size:18.17px;line-height:18.17px;font-weight:normal;font-style:normal;color:#222222;white-space:pre;transform:scaleX(0.9890);transform-origin:0 0;">(41)</div>
<div style="position:absolute;left:1023.14px;top:1238.82px;font-size:18.17px;line-height:18.17px;font-weight:normal;font-style:normal;color:#222222;white-space:pre;transform:scaleX(0.9890);transform-origin:0 0;">(63)</div>
<div style="position:absolute;left:1146.14px;top:1238.82px;font-size:18.17px;line-height:18.17px;font-weight:normal;font-style:normal;color:#222222;white-space:pre;transform:scaleX(0.9890);transform-origin:0 0;">(91)</div>
<div style="position:absolute;left:1260.97px;top:1238.82px;font-size:18.17px;line-height:18.17px;font-weight:normal;font-style:normal;color:#222222;white-space:pre;transform:scaleX(0.9890);transform-origin:0 0;">(116)</div>
<div style="position:absolute;left:69.00px;top:1258.40px;width:1235.80px;height:28.00px;background:#4bb2e6;"></div>
<div style="position:absolute;left:73.47px;top:1263.51px;font-size:20.78px;line-height:20.78px;font-weight:bold;font-style:normal;color:#ffffff;white-space:pre;transform:scaleX(1.0024);transform-origin:0 0;-webkit-text-stroke:0.35px #ffffff;">Gross Margin</div>
<div style="position:absolute;left:767.40px;top:1265.11px;font-size:18.90px;line-height:18.90px;font-weight:bold;font-style:normal;color:#ffffff;white-space:pre;transform:scaleX(1.0730);transform-origin:0 0;-webkit-text-stroke:0.35px #ffffff;">569</div>
<div style="position:absolute;left:873.31px;top:1265.11px;font-size:18.90px;line-height:18.90px;font-weight:bold;font-style:normal;color:#ffffff;white-space:pre;transform:scaleX(1.0730);transform-origin:0 0;-webkit-text-stroke:0.35px #ffffff;">1,204</div>
<div style="position:absolute;left:996.42px;top:1265.11px;font-size:18.90px;line-height:18.90px;font-weight:bold;font-style:normal;color:#ffffff;white-space:pre;transform:scaleX(1.0730);transform-origin:0 0;-webkit-text-stroke:0.35px #ffffff;">1,983</div>
<div style="position:absolute;left:1119.42px;top:1265.11px;font-size:18.90px;line-height:18.90px;font-weight:bold;font-style:normal;color:#ffffff;white-space:pre;transform:scaleX(1.0730);transform-origin:0 0;-webkit-text-stroke:0.35px #ffffff;">3,036</div>
<div style="position:absolute;left:1242.92px;top:1265.11px;font-size:18.90px;line-height:18.90px;font-weight:bold;font-style:normal;color:#ffffff;white-space:pre;transform:scaleX(1.0730);transform-origin:0 0;-webkit-text-stroke:0.35px #ffffff;">4,193</div>
<div style="position:absolute;left:73.39px;top:1291.87px;font-size:18.46px;line-height:18.46px;font-weight:bold;font-style:italic;color:#222222;white-space:pre;transform:scaleX(1.0389);transform-origin:0 0;-webkit-text-stroke:0.35px #222222;">Gross Margin %</div>
<div style="position:absolute;left:746.11px;top:1291.87px;font-size:18.46px;line-height:18.46px;font-weight:bold;font-style:italic;color:#222222;white-space:pre;transform:scaleX(1.1700);transform-origin:0 0;-webkit-text-stroke:0.35px #222222;">96.5%</div>
<div style="position:absolute;left:869.61px;top:1291.87px;font-size:18.46px;line-height:18.46px;font-weight:bold;font-style:italic;color:#222222;white-space:pre;transform:scaleX(1.1700);transform-origin:0 0;-webkit-text-stroke:0.35px #222222;">96.7%</div>
<div style="position:absolute;left:992.11px;top:1291.87px;font-size:18.46px;line-height:18.46px;font-weight:bold;font-style:italic;color:#222222;white-space:pre;transform:scaleX(1.1700);transform-origin:0 0;-webkit-text-stroke:0.35px #222222;">96.9%</div>
<div style="position:absolute;left:1115.11px;top:1291.87px;font-size:18.46px;line-height:18.46px;font-weight:bold;font-style:italic;color:#222222;white-space:pre;transform:scaleX(1.1700);transform-origin:0 0;-webkit-text-stroke:0.35px #222222;">97.1%</div>
<div style="position:absolute;left:1238.61px;top:1291.87px;font-size:18.46px;line-height:18.46px;font-weight:bold;font-style:italic;color:#222222;white-space:pre;transform:scaleX(1.1700);transform-origin:0 0;-webkit-text-stroke:0.35px #222222;">97.3%</div>
<div style="position:absolute;left:90.06px;top:1317.22px;font-size:18.17px;line-height:18.17px;font-weight:normal;font-style:normal;color:#222222;white-space:pre;transform:scaleX(0.9406);transform-origin:0 0;">Variable Expenses</div>
<div style="position:absolute;left:777.14px;top:1317.22px;font-size:18.17px;line-height:18.17px;font-weight:normal;font-style:normal;color:#222222;white-space:pre;transform:scaleX(0.9890);transform-origin:0 0;">(59)</div>
<div style="position:absolute;left:890.62px;top:1317.22px;font-size:18.17px;line-height:18.17px;font-weight:normal;font-style:normal;color:#222222;white-space:pre;transform:scaleX(0.9890);transform-origin:0 0;">(120)</div>
<div style="position:absolute;left:1013.12px;top:1317.22px;font-size:18.17px;line-height:18.17px;font-weight:normal;font-style:normal;color:#222222;white-space:pre;transform:scaleX(0.9890);transform-origin:0 0;">(188)</div>
<div style="position:absolute;left:1136.12px;top:1317.22px;font-size:18.17px;line-height:18.17px;font-weight:normal;font-style:normal;color:#222222;white-space:pre;transform:scaleX(0.9890);transform-origin:0 0;">(275)</div>
<div style="position:absolute;left:1259.62px;top:1317.22px;font-size:18.17px;line-height:18.17px;font-weight:normal;font-style:normal;color:#222222;white-space:pre;transform:scaleX(0.9890);transform-origin:0 0;">(362)</div>
<div style="position:absolute;left:69.00px;top:1336.30px;width:1235.80px;height:27.90px;background:#4bb2e6;"></div>
<div style="position:absolute;left:73.44px;top:1341.41px;font-size:20.78px;line-height:20.78px;font-weight:bold;font-style:normal;color:#ffffff;white-space:pre;transform:scaleX(1.0287);transform-origin:0 0;-webkit-text-stroke:0.35px #ffffff;">Contribution Margin</div>
<div style="position:absolute;left:767.45px;top:1343.01px;font-size:18.90px;line-height:18.90px;font-weight:bold;font-style:normal;color:#ffffff;white-space:pre;transform:scaleX(1.0730);transform-origin:0 0;-webkit-text-stroke:0.35px #ffffff;">510</div>
<div style="position:absolute;left:873.31px;top:1343.01px;font-size:18.90px;line-height:18.90px;font-weight:bold;font-style:normal;color:#ffffff;white-space:pre;transform:scaleX(1.0730);transform-origin:0 0;-webkit-text-stroke:0.35px #ffffff;">1,084</div>
<div style="position:absolute;left:996.27px;top:1343.01px;font-size:18.90px;line-height:18.90px;font-weight:bold;font-style:normal;color:#ffffff;white-space:pre;transform:scaleX(1.0730);transform-origin:0 0;-webkit-text-stroke:0.35px #ffffff;">1,795</div>
<div style="position:absolute;left:1119.27px;top:1343.01px;font-size:18.90px;line-height:18.90px;font-weight:bold;font-style:normal;color:#ffffff;white-space:pre;transform:scaleX(1.0730);transform-origin:0 0;-webkit-text-stroke:0.35px #ffffff;">2,761</div>
<div style="position:absolute;left:1242.77px;top:1343.01px;font-size:18.90px;line-height:18.90px;font-weight:bold;font-style:normal;color:#ffffff;white-space:pre;transform:scaleX(1.0730);transform-origin:0 0;-webkit-text-stroke:0.35px #ffffff;">3,831</div>
<div style="position:absolute;left:73.37px;top:1370.27px;font-size:18.46px;line-height:18.46px;font-weight:bold;font-style:italic;color:#222222;white-space:pre;transform:scaleX(1.0552);transform-origin:0 0;-webkit-text-stroke:0.35px #222222;">Contribution Margin %</div>
<div style="position:absolute;left:746.11px;top:1370.27px;font-size:18.46px;line-height:18.46px;font-weight:bold;font-style:italic;color:#222222;white-space:pre;transform:scaleX(1.1700);transform-origin:0 0;-webkit-text-stroke:0.35px #222222;">86.5%</div>
<div style="position:absolute;left:869.61px;top:1370.27px;font-size:18.46px;line-height:18.46px;font-weight:bold;font-style:italic;color:#222222;white-space:pre;transform:scaleX(1.1700);transform-origin:0 0;-webkit-text-stroke:0.35px #222222;">87.1%</div>
<div style="position:absolute;left:992.11px;top:1370.27px;font-size:18.46px;line-height:18.46px;font-weight:bold;font-style:italic;color:#222222;white-space:pre;transform:scaleX(1.1700);transform-origin:0 0;-webkit-text-stroke:0.35px #222222;">87.7%</div>
<div style="position:absolute;left:1115.11px;top:1370.27px;font-size:18.46px;line-height:18.46px;font-weight:bold;font-style:italic;color:#222222;white-space:pre;transform:scaleX(1.1700);transform-origin:0 0;-webkit-text-stroke:0.35px #222222;">88.3%</div>
<div style="position:absolute;left:1238.61px;top:1370.27px;font-size:18.46px;line-height:18.46px;font-weight:bold;font-style:italic;color:#222222;white-space:pre;transform:scaleX(1.1700);transform-origin:0 0;-webkit-text-stroke:0.35px #222222;">88.9%</div>
<div style="position:absolute;left:88.72px;top:1395.02px;font-size:18.17px;line-height:18.17px;font-weight:normal;font-style:normal;color:#222222;white-space:pre;transform:scaleX(0.9464);transform-origin:0 0;">Payroll Expenses</div>
<div style="position:absolute;left:767.12px;top:1395.02px;font-size:18.17px;line-height:18.17px;font-weight:normal;font-style:normal;color:#222222;white-space:pre;transform:scaleX(0.9890);transform-origin:0 0;">(465)</div>
<div style="position:absolute;left:891.97px;top:1395.02px;font-size:18.17px;line-height:18.17px;font-weight:normal;font-style:normal;color:#222222;white-space:pre;transform:scaleX(0.9890);transform-origin:0 0;">(811)</div>
<div style="position:absolute;left:998.16px;top:1395.02px;font-size:18.17px;line-height:18.17px;font-weight:normal;font-style:normal;color:#222222;white-space:pre;transform:scaleX(0.9890);transform-origin:0 0;">(1,133)</div>
<div style="position:absolute;left:1121.16px;top:1395.02px;font-size:18.17px;line-height:18.17px;font-weight:normal;font-style:normal;color:#222222;white-space:pre;transform:scaleX(0.9890);transform-origin:0 0;">(1,499)</div>
<div style="position:absolute;left:1244.66px;top:1395.02px;font-size:18.17px;line-height:18.17px;font-weight:normal;font-style:normal;color:#222222;white-space:pre;transform:scaleX(0.9890);transform-origin:0 0;">(1,846)</div>
<div style="position:absolute;left:88.73px;top:1416.92px;font-size:18.17px;line-height:18.17px;font-weight:normal;font-style:normal;color:#222222;white-space:pre;transform:scaleX(0.9396);transform-origin:0 0;">Fixed Expenses</div>
<div style="position:absolute;left:767.12px;top:1416.92px;font-size:18.17px;line-height:18.17px;font-weight:normal;font-style:normal;color:#222222;white-space:pre;transform:scaleX(0.9890);transform-origin:0 0;">(239)</div>
<div style="position:absolute;left:890.62px;top:1416.92px;font-size:18.17px;line-height:18.17px;font-weight:normal;font-style:normal;color:#222222;white-space:pre;transform:scaleX(0.9890);transform-origin:0 0;">(239)</div>
<div style="position:absolute;left:1013.12px;top:1416.92px;font-size:18.17px;line-height:18.17px;font-weight:normal;font-style:normal;color:#222222;white-space:pre;transform:scaleX(0.9890);transform-origin:0 0;">(239)</div>
<div style="position:absolute;left:1136.12px;top:1416.92px;font-size:18.17px;line-height:18.17px;font-weight:normal;font-style:normal;color:#222222;white-space:pre;transform:scaleX(0.9890);transform-origin:0 0;">(239)</div>
<div style="position:absolute;left:1259.62px;top:1416.92px;font-size:18.17px;line-height:18.17px;font-weight:normal;font-style:normal;color:#222222;white-space:pre;transform:scaleX(0.9890);transform-origin:0 0;">(239)</div>
<div style="position:absolute;left:69.00px;top:1436.20px;width:1235.80px;height:25.20px;background:#4bb2e6;"></div>
<div style="position:absolute;left:72.93px;top:1440.11px;font-size:20.78px;line-height:20.78px;font-weight:bold;font-style:normal;color:#ffffff;white-space:pre;transform:scaleX(1.0132);transform-origin:0 0;-webkit-text-stroke:0.35px #ffffff;">EBITDA</div>
<div style="position:absolute;left:761.62px;top:1441.71px;font-size:18.90px;line-height:18.90px;font-weight:bold;font-style:normal;color:#ffffff;white-space:pre;transform:scaleX(1.0730);transform-origin:0 0;-webkit-text-stroke:0.35px #ffffff;">(195)</div>
<div style="position:absolute;left:901.55px;top:1441.71px;font-size:18.90px;line-height:18.90px;font-weight:bold;font-style:normal;color:#ffffff;white-space:pre;transform:scaleX(1.0730);transform-origin:0 0;-webkit-text-stroke:0.35px #ffffff;">34</div>
<div style="position:absolute;left:1013.45px;top:1441.71px;font-size:18.90px;line-height:18.90px;font-weight:bold;font-style:normal;color:#ffffff;white-space:pre;transform:scaleX(1.0730);transform-origin:0 0;-webkit-text-stroke:0.35px #ffffff;">422</div>
<div style="position:absolute;left:1119.42px;top:1441.71px;font-size:18.90px;line-height:18.90px;font-weight:bold;font-style:normal;color:#ffffff;white-space:pre;transform:scaleX(1.0730);transform-origin:0 0;-webkit-text-stroke:0.35px #ffffff;">1,023</div>
<div style="position:absolute;left:1242.92px;top:1441.71px;font-size:18.90px;line-height:18.90px;font-weight:bold;font-style:normal;color:#ffffff;white-space:pre;transform:scaleX(1.0730);transform-origin:0 0;-webkit-text-stroke:0.35px #ffffff;">1,746</div>
<div style="position:absolute;left:73.95px;top:1467.37px;font-size:18.46px;line-height:18.46px;font-weight:bold;font-style:italic;color:#222222;white-space:pre;transform:scaleX(1.0784);transform-origin:0 0;-webkit-text-stroke:0.35px #222222;">EBITDA %</div>
<div style="position:absolute;left:758.15px;top:1467.37px;font-size:18.46px;line-height:18.46px;font-weight:bold;font-style:italic;color:#222222;white-space:pre;transform:scaleX(1.1700);transform-origin:0 0;-webkit-text-stroke:0.35px #222222;">0.0%</div>
<div style="position:absolute;left:881.65px;top:1467.37px;font-size:18.46px;line-height:18.46px;font-weight:bold;font-style:italic;color:#222222;white-space:pre;transform:scaleX(1.1700);transform-origin:0 0;-webkit-text-stroke:0.35px #222222;">2.8%</div>
<div style="position:absolute;left:992.11px;top:1467.37px;font-size:18.46px;line-height:18.46px;font-weight:bold;font-style:italic;color:#222222;white-space:pre;transform:scaleX(1.1700);transform-origin:0 0;-webkit-text-stroke:0.35px #222222;">20.6%</div>
<div style="position:absolute;left:1115.11px;top:1467.37px;font-size:18.46px;line-height:18.46px;font-weight:bold;font-style:italic;color:#222222;white-space:pre;transform:scaleX(1.1700);transform-origin:0 0;-webkit-text-stroke:0.35px #222222;">32.7%</div>
<div style="position:absolute;left:1238.61px;top:1467.37px;font-size:18.46px;line-height:18.46px;font-weight:bold;font-style:italic;color:#222222;white-space:pre;transform:scaleX(1.1700);transform-origin:0 0;-webkit-text-stroke:0.35px #222222;">40.5%</div>
<div style="position:absolute;left:88.66px;top:1492.42px;font-size:18.17px;line-height:18.17px;font-weight:normal;font-style:normal;color:#222222;white-space:pre;transform:scaleX(0.9920);transform-origin:0 0;">Depreciation &amp; Amortization</div>
<div style="position:absolute;left:777.14px;top:1492.42px;font-size:18.17px;line-height:18.17px;font-weight:normal;font-style:normal;color:#222222;white-space:pre;transform:scaleX(0.9890);transform-origin:0 0;">(72)</div>
<div style="position:absolute;left:900.64px;top:1492.42px;font-size:18.17px;line-height:18.17px;font-weight:normal;font-style:normal;color:#222222;white-space:pre;transform:scaleX(0.9890);transform-origin:0 0;">(86)</div>
<div style="position:absolute;left:1023.14px;top:1492.42px;font-size:18.17px;line-height:18.17px;font-weight:normal;font-style:normal;color:#222222;white-space:pre;transform:scaleX(0.9890);transform-origin:0 0;">(86)</div>
<div style="position:absolute;left:1146.14px;top:1492.42px;font-size:18.17px;line-height:18.17px;font-weight:normal;font-style:normal;color:#222222;white-space:pre;transform:scaleX(0.9890);transform-origin:0 0;">(86)</div>
<div style="position:absolute;left:1269.64px;top:1492.42px;font-size:18.17px;line-height:18.17px;font-weight:normal;font-style:normal;color:#222222;white-space:pre;transform:scaleX(0.9890);transform-origin:0 0;">(86)</div>
<div style="position:absolute;left:88.50px;top:1514.42px;font-size:18.17px;line-height:18.17px;font-weight:normal;font-style:normal;color:#222222;white-space:pre;transform:scaleX(0.9813);transform-origin:0 0;">Interest Expense</div>
<div style="position:absolute;left:777.14px;top:1514.42px;font-size:18.17px;line-height:18.17px;font-weight:normal;font-style:normal;color:#222222;white-space:pre;transform:scaleX(0.9890);transform-origin:0 0;">(18)</div>
<div style="position:absolute;left:900.64px;top:1514.42px;font-size:18.17px;line-height:18.17px;font-weight:normal;font-style:normal;color:#222222;white-space:pre;transform:scaleX(0.9890);transform-origin:0 0;">(17)</div>
<div style="position:absolute;left:1023.14px;top:1514.42px;font-size:18.17px;line-height:18.17px;font-weight:normal;font-style:normal;color:#222222;white-space:pre;transform:scaleX(0.9890);transform-origin:0 0;">(14)</div>
<div style="position:absolute;left:1147.49px;top:1514.42px;font-size:18.17px;line-height:18.17px;font-weight:normal;font-style:normal;color:#222222;white-space:pre;transform:scaleX(0.9890);transform-origin:0 0;">(11)</div>
<div style="position:absolute;left:1279.61px;top:1514.42px;font-size:18.17px;line-height:18.17px;font-weight:normal;font-style:normal;color:#222222;white-space:pre;transform:scaleX(0.9890);transform-origin:0 0;">(7)</div>
<div style="position:absolute;left:69.00px;top:1533.30px;width:1235.80px;height:27.90px;background:#4bb2e6;"></div>
<div style="position:absolute;left:72.90px;top:1537.71px;font-size:20.78px;line-height:20.78px;font-weight:bold;font-style:normal;color:#ffffff;white-space:pre;transform:scaleX(1.0374);transform-origin:0 0;-webkit-text-stroke:0.35px #ffffff;">Net Profit Before Tax</div>
<div style="position:absolute;left:761.62px;top:1539.31px;font-size:18.90px;line-height:18.90px;font-weight:bold;font-style:normal;color:#ffffff;white-space:pre;transform:scaleX(1.0730);transform-origin:0 0;-webkit-text-stroke:0.35px #ffffff;">(285)</div>
<div style="position:absolute;left:896.42px;top:1539.31px;font-size:18.90px;line-height:18.90px;font-weight:bold;font-style:normal;color:#ffffff;white-space:pre;transform:scaleX(1.0730);transform-origin:0 0;-webkit-text-stroke:0.35px #ffffff;">(69)</div>
<div style="position:absolute;left:1013.45px;top:1539.31px;font-size:18.90px;line-height:18.90px;font-weight:bold;font-style:normal;color:#ffffff;white-space:pre;transform:scaleX(1.0730);transform-origin:0 0;-webkit-text-stroke:0.35px #ffffff;">322</div>
<div style="position:absolute;left:1136.55px;top:1539.31px;font-size:18.90px;line-height:18.90px;font-weight:bold;font-style:normal;color:#ffffff;white-space:pre;transform:scaleX(1.0730);transform-origin:0 0;-webkit-text-stroke:0.35px #ffffff;">927</div>
<div style="position:absolute;left:1242.92px;top:1539.31px;font-size:18.90px;line-height:18.90px;font-weight:bold;font-style:normal;color:#ffffff;white-space:pre;transform:scaleX(1.0730);transform-origin:0 0;-webkit-text-stroke:0.35px #ffffff;">1,653</div>
<div style="position:absolute;left:73.96px;top:1567.37px;font-size:18.46px;line-height:18.46px;font-weight:bold;font-style:italic;color:#222222;white-space:pre;transform:scaleX(1.0621);transform-origin:0 0;-webkit-text-stroke:0.35px #222222;">Net Profit Before Tax %</div>
<div style="position:absolute;left:758.15px;top:1567.37px;font-size:18.46px;line-height:18.46px;font-weight:bold;font-style:italic;color:#222222;white-space:pre;transform:scaleX(1.1700);transform-origin:0 0;-webkit-text-stroke:0.35px #222222;">0.0%</div>
<div style="position:absolute;left:881.65px;top:1567.37px;font-size:18.46px;line-height:18.46px;font-weight:bold;font-style:italic;color:#222222;white-space:pre;transform:scaleX(1.1700);transform-origin:0 0;-webkit-text-stroke:0.35px #222222;">0.0%</div>
<div style="position:absolute;left:992.11px;top:1567.37px;font-size:18.46px;line-height:18.46px;font-weight:bold;font-style:italic;color:#222222;white-space:pre;transform:scaleX(1.1700);transform-origin:0 0;-webkit-text-stroke:0.35px #222222;">15.7%</div>
<div style="position:absolute;left:1115.11px;top:1567.37px;font-size:18.46px;line-height:18.46px;font-weight:bold;font-style:italic;color:#222222;white-space:pre;transform:scaleX(1.1700);transform-origin:0 0;-webkit-text-stroke:0.35px #222222;">29.6%</div>
<div style="position:absolute;left:1238.61px;top:1567.37px;font-size:18.46px;line-height:18.46px;font-weight:bold;font-style:italic;color:#222222;white-space:pre;transform:scaleX(1.1700);transform-origin:0 0;-webkit-text-stroke:0.35px #222222;">38.3%</div>
<div style="position:absolute;left:89.22px;top:1592.22px;font-size:18.17px;line-height:18.17px;font-weight:normal;font-style:normal;color:#222222;white-space:pre;transform:scaleX(0.9736);transform-origin:0 0;">Corporate Tax Expense</div>
<div style="position:absolute;left:795.50px;top:1601.20px;width:5.00px;height:1.50px;background:#222222;"></div>
<div style="position:absolute;left:919.00px;top:1601.20px;width:5.00px;height:1.50px;background:#222222;"></div>
<div style="position:absolute;left:1023.14px;top:1592.22px;font-size:18.17px;line-height:18.17px;font-weight:normal;font-style:normal;color:#222222;white-space:pre;transform:scaleX(0.9890);transform-origin:0 0;">(81)</div>
<div style="position:absolute;left:1136.12px;top:1592.22px;font-size:18.17px;line-height:18.17px;font-weight:normal;font-style:normal;color:#222222;white-space:pre;transform:scaleX(0.9890);transform-origin:0 0;">(232)</div>
<div style="position:absolute;left:1259.62px;top:1592.22px;font-size:18.17px;line-height:18.17px;font-weight:normal;font-style:normal;color:#222222;white-space:pre;transform:scaleX(0.9890);transform-origin:0 0;">(413)</div>
<div style="position:absolute;left:69.00px;top:1611.30px;width:1235.80px;height:27.90px;background:#4bb2e6;"></div>
<div style="position:absolute;left:72.88px;top:1616.41px;font-size:20.78px;line-height:20.78px;font-weight:bold;font-style:normal;color:#ffffff;white-space:pre;transform:scaleX(1.0533);transform-origin:0 0;-webkit-text-stroke:0.35px #ffffff;">Net Profit After Tax</div>
<div style="position:absolute;left:761.62px;top:1618.01px;font-size:18.90px;line-height:18.90px;font-weight:bold;font-style:normal;color:#ffffff;white-space:pre;transform:scaleX(1.0730);transform-origin:0 0;-webkit-text-stroke:0.35px #ffffff;">(285)</div>
<div style="position:absolute;left:896.42px;top:1618.01px;font-size:18.90px;line-height:18.90px;font-weight:bold;font-style:normal;color:#ffffff;white-space:pre;transform:scaleX(1.0730);transform-origin:0 0;-webkit-text-stroke:0.35px #ffffff;">(69)</div>
<div style="position:absolute;left:1013.45px;top:1618.01px;font-size:18.90px;line-height:18.90px;font-weight:bold;font-style:normal;color:#ffffff;white-space:pre;transform:scaleX(1.0730);transform-origin:0 0;-webkit-text-stroke:0.35px #ffffff;">242</div>
<div style="position:absolute;left:1136.20px;top:1618.01px;font-size:18.90px;line-height:18.90px;font-weight:bold;font-style:normal;color:#ffffff;white-space:pre;transform:scaleX(1.0730);transform-origin:0 0;-webkit-text-stroke:0.35px #ffffff;">695</div>
<div style="position:absolute;left:1242.97px;top:1618.01px;font-size:18.90px;line-height:18.90px;font-weight:bold;font-style:normal;color:#ffffff;white-space:pre;transform:scaleX(1.0730);transform-origin:0 0;-webkit-text-stroke:0.35px #ffffff;">1,239</div>
<div style="position:absolute;left:73.95px;top:1645.27px;font-size:18.46px;line-height:18.46px;font-weight:bold;font-style:italic;color:#222222;white-space:pre;transform:scaleX(1.0733);transform-origin:0 0;-webkit-text-stroke:0.35px #222222;">Net Profit After Tax %</div>
<div style="position:absolute;left:758.15px;top:1645.27px;font-size:18.46px;line-height:18.46px;font-weight:bold;font-style:italic;color:#222222;white-space:pre;transform:scaleX(1.1700);transform-origin:0 0;-webkit-text-stroke:0.35px #222222;">0.0%</div>
<div style="position:absolute;left:881.65px;top:1645.27px;font-size:18.46px;line-height:18.46px;font-weight:bold;font-style:italic;color:#222222;white-space:pre;transform:scaleX(1.1700);transform-origin:0 0;-webkit-text-stroke:0.35px #222222;">0.0%</div>
<div style="position:absolute;left:993.73px;top:1645.27px;font-size:18.46px;line-height:18.46px;font-weight:bold;font-style:italic;color:#222222;white-space:pre;transform:scaleX(1.1700);transform-origin:0 0;-webkit-text-stroke:0.35px #222222;">11.8%</div>
<div style="position:absolute;left:1115.11px;top:1645.27px;font-size:18.46px;line-height:18.46px;font-weight:bold;font-style:italic;color:#222222;white-space:pre;transform:scaleX(1.1700);transform-origin:0 0;-webkit-text-stroke:0.35px #222222;">22.2%</div>
<div style="position:absolute;left:1238.61px;top:1645.27px;font-size:18.46px;line-height:18.46px;font-weight:bold;font-style:italic;color:#222222;white-space:pre;transform:scaleX(1.1700);transform-origin:0 0;-webkit-text-stroke:0.35px #222222;">28.8%</div>
<div style="position:absolute;left:1700.00px;top:1666.00px;width:90.00px;height:19.00px;background:#ffffff;"></div>
<div style="position:absolute;left:11.00px;top:1670.00px;width:1710.00px;height:48.00px;background:#0a0a0a;border-top-right-radius:8px;"></div>
<div style="position:absolute;left:1769.00px;top:1670.00px;width:1121.00px;height:48.00px;background:#0a0a0a;border-top-left-radius:8px;"></div>
<div style="position:absolute;left:1715.00px;top:1700.00px;width:60.00px;height:18.00px;background:#0a0a0a;"></div>
<div style="position:absolute;left:1720.90px;top:1668.00px;width:48.10px;height:44.30px;background:linear-gradient(#ffffff 0%, #f4f9fd 40%, #c9e5f7 100%);border-radius:0 0 7px 7px;"></div>
<div style="position:absolute;left:1732.87px;top:1680.47px;font-size:21.66px;line-height:21.66px;font-weight:normal;font-style:normal;color:#111111;white-space:pre;transform:scaleX(0.8264);transform-origin:0 0;">BE</div>
<div style="position:absolute;left:1733.00px;top:1705.00px;width:24.30px;height:3.00px;background:#107c41;"></div>
<div style="position:absolute;left:11.00px;top:1718.00px;width:2879.00px;height:32.00px;background:#141414;"></div>
<div style="position:absolute;left:11.00px;top:1717.60px;width:2867.00px;height:1.00px;background:#2c2c2c;"></div>
<svg style="position:absolute;left:44.00px;top:1684.00px;" width="14" height="18" viewBox="0 0 14 18"><path d="M10.5 1.5 L3 8.5 L10.5 15.5" stroke="#9a9a9a" stroke-width="1.6" fill="none"/></svg>
<svg style="position:absolute;left:93.00px;top:1684.00px;" width="14" height="18" viewBox="0 0 14 18"><path d="M2.5 1.5 L10 8.5 L2.5 15.5" stroke="#9a9a9a" stroke-width="1.6" fill="none"/></svg>
<div style="position:absolute;left:189.45px;top:1685.04px;font-size:21.80px;line-height:21.80px;font-weight:normal;font-style:normal;color:#ffffff;white-space:pre;transform:scaleX(0.9624);transform-origin:0 0;">Contents</div>
<div style="position:absolute;left:299.50px;top:1676.00px;width:127.30px;height:36.30px;background:#ffea5e;border-radius:7px;"></div>
<div style="position:absolute;left:311.92px;top:1685.04px;font-size:21.80px;line-height:21.80px;font-weight:normal;font-style:normal;color:#111111;white-space:pre;transform:scaleX(0.9623);transform-origin:0 0;">Dashboard</div>
<div style="position:absolute;left:440.20px;top:1676.00px;width:105.30px;height:36.30px;background:#ffea5e;border-radius:7px;"></div>
<div style="position:absolute;left:454.12px;top:1685.04px;font-size:21.80px;line-height:21.80px;font-weight:normal;font-style:normal;color:#111111;white-space:pre;transform:scaleX(0.9055);transform-origin:0 0;">Revenue</div>
<div style="position:absolute;left:559.50px;top:1676.00px;width:157.10px;height:36.30px;background:#ffea5e;border-radius:7px;"></div>
<div style="position:absolute;left:571.54px;top:1685.04px;font-size:21.80px;line-height:21.80px;font-weight:normal;font-style:normal;color:#111111;white-space:pre;transform:scaleX(0.8837);transform-origin:0 0;">COGS &amp; OPEX</div>
<div style="position:absolute;left:730.00px;top:1676.00px;width:88.40px;height:36.30px;background:#ffea5e;border-radius:7px;"></div>
<div style="position:absolute;left:742.34px;top:1685.04px;font-size:21.80px;line-height:21.80px;font-weight:normal;font-style:normal;color:#111111;white-space:pre;transform:scaleX(0.9512);transform-origin:0 0;">Payroll</div>
<div style="position:absolute;left:832.20px;top:1676.00px;width:86.20px;height:36.30px;background:#ffea5e;border-radius:7px;"></div>
<div style="position:absolute;left:844.28px;top:1685.04px;font-size:21.80px;line-height:21.80px;font-weight:normal;font-style:normal;color:#111111;white-space:pre;transform:scaleX(0.8427);transform-origin:0 0;">CAPEX</div>
<div style="position:absolute;left:932.20px;top:1676.00px;width:112.20px;height:36.30px;background:#ffea5e;border-radius:7px;"></div>
<div style="position:absolute;left:944.16px;top:1685.04px;font-size:21.80px;line-height:21.80px;font-weight:normal;font-style:normal;color:#111111;white-space:pre;transform:scaleX(0.9512);transform-origin:0 0;">CapTable</div>
<div style="position:absolute;left:1058.20px;top:1676.00px;width:89.60px;height:36.30px;background:#ffea5e;border-radius:7px;"></div>
<div style="position:absolute;left:1070.14px;top:1685.04px;font-size:21.80px;line-height:21.80px;font-weight:normal;font-style:normal;color:#111111;white-space:pre;transform:scaleX(0.9732);transform-origin:0 0;">Capital</div>
<div style="position:absolute;left:1161.20px;top:1676.00px;width:41.50px;height:36.30px;background:#4fb4e8;border-radius:7px;"></div>
<div style="position:absolute;left:1172.97px;top:1685.04px;font-size:21.80px;line-height:21.80px;font-weight:normal;font-style:normal;color:#111111;white-space:pre;transform:scaleX(0.8834);transform-origin:0 0;">IS</div>
<div style="position:absolute;left:1216.20px;top:1676.00px;width:47.30px;height:36.30px;background:#4fb4e8;border-radius:7px;"></div>
<div style="position:absolute;left:1228.31px;top:1685.04px;font-size:21.80px;line-height:21.80px;font-weight:normal;font-style:normal;color:#111111;white-space:pre;transform:scaleX(0.8142);transform-origin:0 0;">CF</div>
<div style="position:absolute;left:1277.30px;top:1676.00px;width:47.20px;height:36.30px;background:#4fb4e8;border-radius:7px;"></div>
<div style="position:absolute;left:1288.85px;top:1685.04px;font-size:21.80px;line-height:21.80px;font-weight:normal;font-style:normal;color:#111111;white-space:pre;transform:scaleX(0.8339);transform-origin:0 0;">BS</div>
<div style="position:absolute;left:1338.30px;top:1676.00px;width:114.30px;height:36.30px;background:#4fb4e8;border-radius:7px;"></div>
<div style="position:absolute;left:1351.11px;top:1685.04px;font-size:21.80px;line-height:21.80px;font-weight:normal;font-style:normal;color:#111111;white-space:pre;transform:scaleX(0.9063);transform-origin:0 0;">Scenarios</div>
<div style="position:absolute;left:1466.40px;top:1676.00px;width:114.20px;height:36.30px;background:#4fb4e8;border-radius:7px;"></div>
<div style="position:absolute;left:1479.85px;top:1685.04px;font-size:21.80px;line-height:21.80px;font-weight:normal;font-style:normal;color:#111111;white-space:pre;transform:scaleX(0.9845);transform-origin:0 0;">Valuation</div>
<div style="position:absolute;left:1594.20px;top:1676.00px;width:113.70px;height:36.30px;background:#4fb4e8;border-radius:7px;"></div>
<div style="position:absolute;left:1607.48px;top:1685.04px;font-size:21.80px;line-height:21.80px;font-weight:normal;font-style:normal;color:#111111;white-space:pre;transform:scaleX(0.9385);transform-origin:0 0;">Summary</div>
<div style="position:absolute;left:1781.90px;top:1676.00px;width:71.90px;height:36.30px;background:#4fb4e8;border-radius:7px;"></div>
<div style="position:absolute;left:1794.68px;top:1685.04px;font-size:21.80px;line-height:21.80px;font-weight:normal;font-style:normal;color:#111111;white-space:pre;transform:scaleX(0.8721);transform-origin:0 0;">ROIC</div>
<div style="position:absolute;left:1867.00px;top:1676.00px;width:84.80px;height:36.30px;background:#4fb4e8;border-radius:7px;"></div>
<div style="position:absolute;left:1879.49px;top:1685.04px;font-size:21.80px;line-height:21.80px;font-weight:normal;font-style:normal;color:#111111;white-space:pre;transform:scaleX(0.9221);transform-origin:0 0;">Charts</div>
<div style="position:absolute;left:1964.90px;top:1676.00px;width:63.60px;height:36.30px;background:#4fb4e8;border-radius:7px;"></div>
<div style="position:absolute;left:1977.75px;top:1685.04px;font-size:21.80px;line-height:21.80px;font-weight:normal;font-style:normal;color:#111111;white-space:pre;transform:scaleX(0.8289);transform-origin:0 0;">KPIs</div>
<div style="position:absolute;left:292.20px;top:1680.00px;width:1.00px;height:28.00px;background:#7c7c7c;"></div>
<div style="position:absolute;left:433.10px;top:1680.00px;width:1.00px;height:28.00px;background:#7c7c7c;"></div>
<div style="position:absolute;left:551.90px;top:1680.00px;width:1.00px;height:28.00px;background:#7c7c7c;"></div>
<div style="position:absolute;left:722.50px;top:1680.00px;width:1.00px;height:28.00px;background:#7c7c7c;"></div>
<div style="position:absolute;left:824.70px;top:1680.00px;width:1.00px;height:28.00px;background:#7c7c7c;"></div>
<div style="position:absolute;left:924.70px;top:1680.00px;width:1.00px;height:28.00px;background:#7c7c7c;"></div>
<div style="position:absolute;left:1050.50px;top:1680.00px;width:1.00px;height:28.00px;background:#7c7c7c;"></div>
<div style="position:absolute;left:1154.00px;top:1680.00px;width:1.00px;height:28.00px;background:#7c7c7c;"></div>
<div style="position:absolute;left:1209.20px;top:1680.00px;width:1.00px;height:28.00px;background:#7c7c7c;"></div>
<div style="position:absolute;left:1270.30px;top:1680.00px;width:1.00px;height:28.00px;background:#7c7c7c;"></div>
<div style="position:absolute;left:1330.80px;top:1680.00px;width:1.00px;height:28.00px;background:#7c7c7c;"></div>
<div style="position:absolute;left:1459.10px;top:1680.00px;width:1.00px;height:28.00px;background:#7c7c7c;"></div>
<div style="position:absolute;left:1587.20px;top:1680.00px;width:1.00px;height:28.00px;background:#7c7c7c;"></div>
<div style="position:absolute;left:1714.00px;top:1680.00px;width:1.00px;height:28.00px;background:#7c7c7c;"></div>
<div style="position:absolute;left:1775.20px;top:1680.00px;width:1.00px;height:28.00px;background:#7c7c7c;"></div>
<div style="position:absolute;left:1859.90px;top:1680.00px;width:1.00px;height:28.00px;background:#7c7c7c;"></div>
<div style="position:absolute;left:1957.80px;top:1680.00px;width:1.00px;height:28.00px;background:#7c7c7c;"></div>
<div style="position:absolute;left:2035.00px;top:1680.00px;width:1.00px;height:28.00px;background:#7c7c7c;"></div>
<div style="position:absolute;left:2042px;top:1676px;width:29.9px;height:36.3px;overflow:hidden;">
<div style="position:absolute;left:0.00px;top:0.00px;width:60.00px;height:36.30px;background:#4fb4e8;border-radius:7px;"></div>
<div style="position:absolute;left:11.5px;top:9.04px;font-size:21.80px;line-height:21.80px;color:#111;white-space:pre;transform:scaleX(0.93);transform-origin:0 0;">Scenarios</div>
</div>
<div style="position:absolute;left:2086.80px;top:1690.30px;width:4.40px;height:4.40px;background:#ffffff;border-radius:50%;"></div>
<div style="position:absolute;left:2093.40px;top:1690.30px;width:4.40px;height:4.40px;background:#ffffff;border-radius:50%;"></div>
<div style="position:absolute;left:2100.00px;top:1690.30px;width:4.40px;height:4.40px;background:#ffffff;border-radius:50%;"></div>
<div style="position:absolute;left:2134.80px;top:1692.00px;width:17.00px;height:1.60px;background:#ffffff;"></div>
<div style="position:absolute;left:2142.50px;top:1684.30px;width:1.60px;height:16.90px;background:#ffffff;"></div>
<div style="position:absolute;left:2190.20px;top:1687.00px;width:3.40px;height:3.40px;background:#ffffff;border-radius:50%;"></div>
<div style="position:absolute;left:2190.20px;top:1693.20px;width:3.40px;height:3.40px;background:#ffffff;border-radius:50%;"></div>
<div style="position:absolute;left:2190.20px;top:1699.40px;width:3.40px;height:3.40px;background:#ffffff;border-radius:50%;"></div>
<div style="position:absolute;left:2215.80px;top:1680.80px;width:643.20px;height:24.70px;background:#1b1b1b;border-radius:12px;"></div>
<svg style="position:absolute;left:2222.00px;top:1686.00px;" width="13" height="15" viewBox="0 0 13 15"><path d="M11.5 0.5 V14 L1 7.25 Z" fill="#9a9a9a" stroke="#9a9a9a" stroke-linejoin="round" stroke-width="1"/></svg>
<svg style="position:absolute;left:2840.00px;top:1686.00px;" width="13" height="15" viewBox="0 0 13 15"><path d="M1.5 0.5 V14 L12 7.25 Z" fill="#9a9a9a" stroke="#9a9a9a" stroke-linejoin="round" stroke-width="1"/></svg>
<div style="position:absolute;left:2242.10px;top:1687.40px;width:590.40px;height:11.60px;background:#9e9e9e;border-radius:6px;"></div>
<div style="position:absolute;left:2862.00px;top:278.00px;width:27.50px;height:1393.50px;background:#1b1b1b;border-radius:12px;"></div>
<svg style="position:absolute;left:2868.00px;top:285.00px;" width="16" height="12" viewBox="0 0 16 12"><path d="M1 11 H15 L8 1 Z" fill="#8e8e8e" stroke="#8e8e8e" stroke-linejoin="round" stroke-width="1.2"/></svg>
<svg style="position:absolute;left:2868.00px;top:1653.00px;" width="16" height="12" viewBox="0 0 16 12"><path d="M1 1 H15 L8 11 Z" fill="#8e8e8e" stroke="#8e8e8e" stroke-linejoin="round" stroke-width="1.2"/></svg>
<div style="position:absolute;left:2869.80px;top:304.10px;width:12.40px;height:1111.70px;background:#9e9e9e;border-radius:7px;"></div>
<div style="position:absolute;left:26.10px;top:1728.31px;font-size:15.70px;line-height:15.70px;font-weight:normal;font-style:normal;color:#e8e8e8;white-space:pre;transform:scaleX(0.9522);transform-origin:0 0;">Ready</div>
<svg style="position:absolute;left:98.00px;top:1726.00px;" width="24" height="21" viewBox="0 0 24 21"><rect x="1" y="1" width="21" height="17" fill="none" stroke="#e8e8e8" stroke-width="1.5"/>
<path d="M1 5 H22 M4 9 H9 M4 12.5 H8 M4 16 H8" stroke="#e8e8e8" stroke-width="1.5"/>
<circle cx="15.5" cy="13.5" r="6" fill="#141414" stroke="#e8e8e8" stroke-width="1.6"/><circle cx="15.5" cy="13.5" r="3" fill="#e8e8e8"/></svg>
<svg style="position:absolute;left:145.00px;top:1725.00px;" width="24" height="23" viewBox="0 0 24 23"><circle cx="11" cy="3.5" r="2.6" fill="none" stroke="#e8e8e8" stroke-width="1.4"/>
<path d="M1.5 7.5 Q6 9.5 11 9.5 Q16 9.5 20.5 7.5 M8 9.5 V13 L4.5 21 M14 9.5 V13" stroke="#e8e8e8" stroke-width="1.5" fill="none" stroke-linecap="round"/>
<path d="M13.5 15 L21.5 22.5 M21.5 15 L13.5 22.5" stroke="#e8e8e8" stroke-width="1.5"/></svg>
<div style="position:absolute;left:172.81px;top:1728.31px;font-size:15.70px;line-height:15.70px;font-weight:bold;font-style:normal;color:#f0f0f0;white-space:pre;transform:scaleX(1.0046);transform-origin:0 0;-webkit-text-stroke:0.35px #f0f0f0;">Accessibility: Investigate</div>
<div style="position:absolute;left:2445.00px;top:1719.00px;width:59.70px;height:31.00px;background:#232323;"></div>
<svg style="position:absolute;left:2463.00px;top:1724.00px;" width="23" height="21" viewBox="0 0 23 21"><rect x="1.5" y="1.5" width="19" height="18" fill="none" stroke="#f0f0f0" stroke-width="2"/>
<path d="M7.8 1.5 V19.5 M14.2 1.5 V19.5 M1.5 7.5 H20.5 M1.5 13.5 H20.5" stroke="#f0f0f0" stroke-width="2"/></svg>
<svg style="position:absolute;left:2523.00px;top:1724.00px;" width="24" height="21" viewBox="0 0 24 21"><rect x="1.5" y="1.5" width="20" height="18" fill="none" stroke="#f0f0f0" stroke-width="2"/>
<rect x="6" y="5" width="11" height="11" fill="none" stroke="#f0f0f0" stroke-width="1.6"/>
<path d="M8.5 8 H14.5 M8.5 10.5 H14.5 M8.5 13 H14.5" stroke="#f0f0f0" stroke-width="1.4"/></svg>
<svg style="position:absolute;left:2583.00px;top:1724.00px;" width="24" height="21" viewBox="0 0 24 21"><rect x="1.5" y="1.5" width="20" height="18" fill="none" stroke="#f0f0f0" stroke-width="2"/>
<path d="M1.5 12 H12 V1.5 M6.5 1.5 V12" stroke="#f0f0f0" stroke-width="2" fill="none"/></svg>
<div style="position:absolute;left:2633.00px;top:1733.50px;width:11.60px;height:1.50px;background:#e0e0e0;"></div>
<div style="position:absolute;left:2653.20px;top:1733.40px;width:147.50px;height:1.80px;background:#bdbdbd;"></div>
<div style="position:absolute;left:2726.00px;top:1726.10px;width:8.00px;height:16.70px;background:#c4c4c4;border-radius:1px;"></div>
<div style="position:absolute;left:2808.90px;top:1733.50px;width:11.90px;height:1.50px;background:#e0e0e0;"></div>
<div style="position:absolute;left:2814.10px;top:1728.80px;width:1.50px;height:11.10px;background:#e0e0e0;"></div>
<div style="position:absolute;left:2838.78px;top:1728.31px;font-size:15.70px;line-height:15.70px;font-weight:normal;font-style:normal;color:#e8e8e8;white-space:pre;transform:scaleX(1.0380);transform-origin:0 0;">110%</div>
</body></html>
